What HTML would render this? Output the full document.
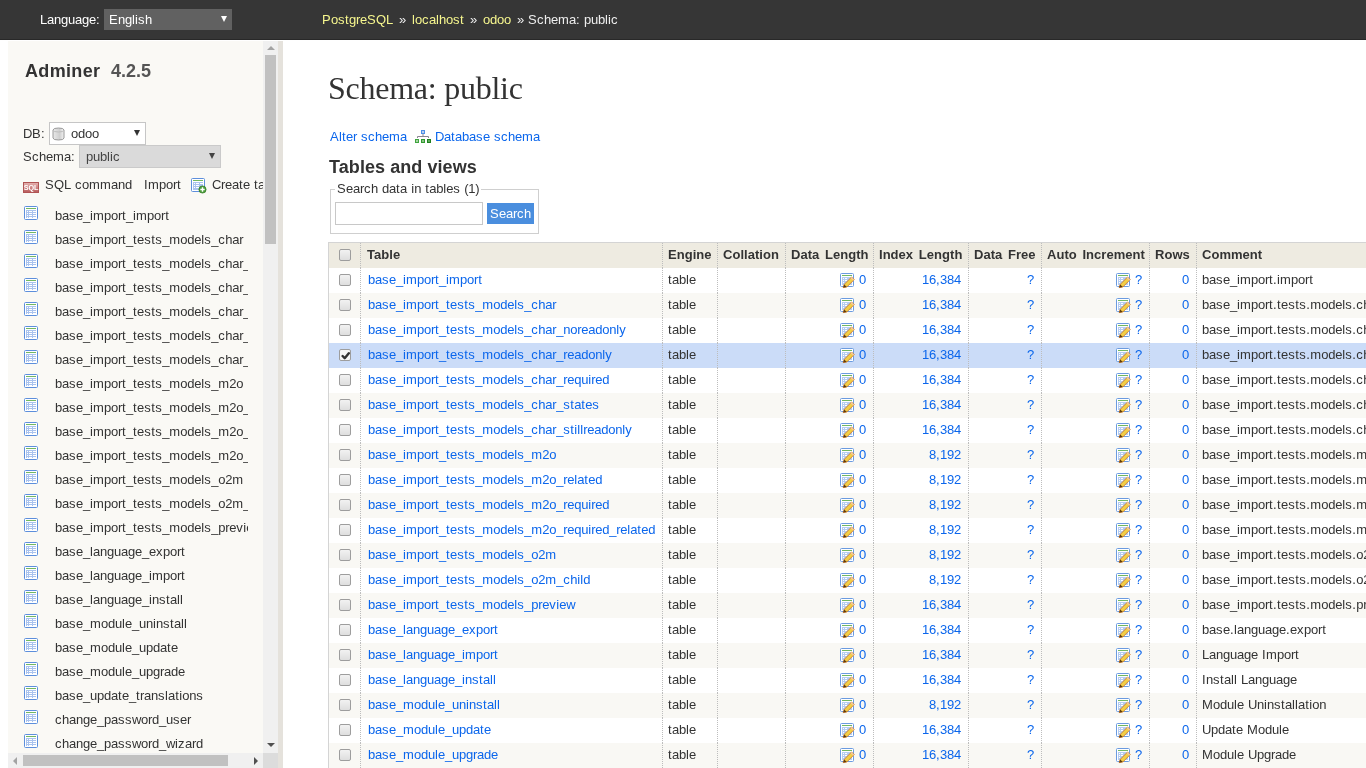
<!DOCTYPE html>
<html><head><meta charset="utf-8"><title>Schema: public - odoo - Adminer</title>
<style>
*{box-sizing:border-box}
html,body{margin:0;padding:0;width:1366px;height:768px;overflow:hidden;background:#fff;font:13px/15px "Liberation Sans",sans-serif;color:#333}
.abs{position:absolute;white-space:nowrap}
#wrap{letter-spacing:-0.2299px}
i{font-style:normal}.k0{letter-spacing:0.5px}.k1{letter-spacing:0.1118px}.k2{letter-spacing:0.1709px}.k3{letter-spacing:-0.3291px}.k4{letter-spacing:0.3882px}.k5{letter-spacing:-0.3882px}.k6{letter-spacing:0.3291px}.k7{letter-spacing:-0.1118px}
#hdr{position:absolute;left:0;top:0;width:1366px;height:40px;background:#363636;border-bottom:1px solid #282828}
#lang{left:40px;top:12px;color:#fff}
#lsel{position:absolute;left:104px;top:9px;width:128px;height:21px;background:#616161}
#lsel span{position:absolute;left:5px;top:3px;color:#fff}
.tri{position:absolute;width:0;height:0;border-left:3.5px solid transparent;border-right:3.5px solid transparent}
.bc{top:12px;color:#eee}
.bc a{color:#f6f68e}
#menu{position:absolute;left:8px;top:41px;width:255px;height:712px;background:#faf9f5;overflow:hidden}
#vsb{position:absolute;left:263px;top:41px;width:15px;height:712px;background:#f0f0f0}
#vth{position:absolute;left:265px;top:55px;width:11px;height:189px;background:#c1c1c1}
#hsb{position:absolute;left:8px;top:753px;width:255px;height:15px;background:#f0f0f0}
#hth{position:absolute;left:23px;top:755px;width:205px;height:11px;background:#c1c1c1}
#corner{position:absolute;left:263px;top:753px;width:15px;height:15px;background:#dcdcdc}
#strip{position:absolute;left:278px;top:41px;width:5px;height:727px;background:#e5e2dc}
.si{position:absolute;left:16px;width:14px;height:14px}
.si svg{display:block}
.st{position:absolute;left:47px;width:193px;overflow:hidden;white-space:nowrap;color:#333}
#h1{position:absolute;left:328px;top:70px;letter-spacing:-0.25px;font:32px/36px "Liberation Serif",serif;color:#333;white-space:nowrap}
a{color:#0b66ec;text-decoration:none}
#links{left:330px;top:129px}
#h2{position:absolute;left:329px;top:157px;letter-spacing:.07px;font:bold 18px/21px "Liberation Sans",sans-serif;color:#333;white-space:nowrap}
#fs{position:absolute;left:330px;top:189px;width:209px;height:45px;border:1px solid #cfcfcf}
#legend{position:absolute;left:335px;top:181px;padding:0 2px;background:#fff;white-space:nowrap;color:#333}
#sinp{position:absolute;left:335px;top:202px;width:148px;height:23px;border:1px solid #c8c8c8;background:#fff}
#sbtn{position:absolute;left:487px;top:203px;width:47px;height:21px;background:#4a8ede;color:#fff;text-align:center;line-height:21px}
#tbl{position:absolute;left:328px;top:242px;border-collapse:separate;border-spacing:0;table-layout:fixed;border-top:1px solid #d4d4d4;border-left:1px solid #d4d4d4;width:1500px}
#tbl td,#tbl th{height:25px;padding:4px 7px 6px 6px;line-height:15px;vertical-align:top;white-space:nowrap;overflow:hidden;border-left:1px dotted #bdbdbd;text-align:left}
#tbl th{background:#eeebe1;font-weight:bold;color:#333;letter-spacing:.03px;word-spacing:2.1px;padding-left:5px}
#tbl th.c1h{padding-left:6px}
#tbl td{padding-left:5px}
#tbl td.c1{padding-left:7px}
#tbl .c0{border-left:0;padding-left:6px}
#tbl .r{text-align:right}
tr.odd td{background:#fff}
tr.even td{background:#f9f8f4}
tr.sel td{background:#cbdcf8}
.cb{display:block;width:12px;height:12px;margin:2px 0 0 4px;border:1px solid #9d9d9d;border-radius:2px;background:linear-gradient(#f2f2f2,#dedede)}
.cb.checked{background:#f6f6f6;position:relative}
.cb.checked svg{position:absolute;left:1px;top:1px}
.ei{display:inline-block;vertical-align:top;margin:1px 3px -2px 0}
</style></head><body><div id="wrap" style="position:absolute;left:0;top:0;width:1366px;height:768px;overflow:hidden;will-change:transform">
<div id="hdr"></div>
<div id="lang" class="abs">Language<i class="k4">:</i></div>
<div id="lsel"><span><i class="k6">E</i>ng<i class="k1">l</i><i class="k1">i</i><i class="k0">s</i>h</span><div class="tri" style="left:117px;top:7px;border-top:6px solid #fff"></div></div>
<div class="abs bc" style="left:322px"><a><i class="k6">P</i>o<i class="k0">s</i><i class="k4">t</i>g<i class="k3">r</i>e<i class="k6">S</i><i class="k7">Q</i>L</a></div><div class="abs bc" style="left:399px">»</div><div class="abs bc" style="left:412px"><a><i class="k1">l</i>o<i class="k0">c</i>a<i class="k1">l</i>ho<i class="k0">s</i><i class="k4">t</i></a></div><div class="abs bc" style="left:470px">»</div><div class="abs bc" style="left:483px"><a>odoo</a></div><div class="abs bc" style="left:517px">»</div><div class="abs bc" style="left:528px"><i class="k6">S</i><i class="k0">c</i>he<i class="k2">m</i>a<i class="k4">:</i><i class="k4"> </i>pub<i class="k1">l</i><i class="k1">i</i><i class="k0">c</i></div>

<div id="menu">
<div class="abs" style="left:17px;top:20px;letter-spacing:.33px;font:bold 18px/21px 'Liberation Sans',sans-serif;color:#333">Adminer</div>
<div class="abs" style="left:103px;top:20px;letter-spacing:0;font:bold 18px/21px 'Liberation Sans',sans-serif;color:#555">4.2.5</div>
<div class="abs" style="left:15px;top:85px"><i class="k5">D</i><i class="k6">B</i><i class="k4">:</i></div>
<div style="position:absolute;left:41px;top:81px;width:97px;height:23px;background:#fff;border:1px solid #c6c6c6">
  <svg style="position:absolute;left:2px;top:4px" width="13" height="14" viewBox="0 0 13 14"><defs><linearGradient id="cy" x1="0" x2="1"><stop offset="0" stop-color="#e9e9e9"/><stop offset=".6" stop-color="#cfcfcf"/><stop offset="1" stop-color="#f4f4f4"/></linearGradient></defs><path d="M1 3 Q1 1 6.5 1 Q12 1 12 3 L12 11 Q12 13 6.5 13 Q1 13 1 11 Z" fill="url(#cy)" stroke="#9a9a9a"/><path d="M1 3 Q1 5 6.5 5 Q12 5 12 3" fill="none" stroke="#bdbdbd"/></svg>
  <div class="abs" style="left:21px;top:3px;color:#333">odoo</div>
  <div class="tri" style="left:84px;top:7px;border-top:6px solid #333"></div>
</div>
<div class="abs" style="left:15px;top:108px"><i class="k6">S</i><i class="k0">c</i>he<i class="k2">m</i>a<i class="k4">:</i></div>
<div style="position:absolute;left:71px;top:104px;width:142px;height:23px;background:#dadada;border:1px solid #cacaca">
  <div class="abs" style="left:6px;top:3px;color:#444">pub<i class="k1">l</i><i class="k1">i</i><i class="k0">c</i></div>
  <div class="tri" style="left:129px;top:7px;border-top:6px solid #444"></div>
</div>
<svg style="position:absolute;left:15px;top:141px" width="16" height="11" viewBox="0 0 16 11"><defs><linearGradient id="sq" x1="0" y1="0" x2="0" y2="1"><stop offset="0" stop-color="#e6b4b2"/><stop offset="1" stop-color="#b85a5a"/></linearGradient></defs><rect x="0.5" y="0.5" width="15" height="10" fill="url(#sq)" stroke="#b05454"/><text x="8" y="8.3" font-family="Liberation Sans" font-weight="bold" font-size="7.2" fill="#fff" text-anchor="middle" letter-spacing="-0.1">SQL</text></svg>
<div class="abs" style="left:37px;top:136px"><i class="k6">S</i><i class="k7">Q</i>L<i class="k4"> </i><i class="k0">c</i>o<i class="k2">m</i><i class="k2">m</i>and</div>
<div class="abs" style="left:136px;top:136px"><i class="k4">I</i><i class="k2">m</i>po<i class="k3">r</i><i class="k4">t</i></div>
<svg style="position:absolute;left:183px;top:137px" width="16" height="16" viewBox="0 0 16 16"><rect x="0.5" y="0.5" width="13" height="13" rx="1" fill="#fff" stroke="#5d8fdc"/><rect x="2" y="2" width="10" height="1" fill="#72b863"/><rect x="2" y="4" width="10" height="8" fill="#a9c3ee"/><g fill="#fff"><rect x="3" y="5" width="1" height="1"/><rect x="5" y="5" width="3" height="1"/><rect x="9" y="5" width="3" height="1"/><rect x="3" y="7" width="1" height="1"/><rect x="5" y="7" width="3" height="1"/><rect x="3" y="9" width="1" height="1"/><rect x="5" y="9" width="3" height="1"/></g><circle cx="11.5" cy="11.5" r="3.6" fill="#4c9e3a" stroke="#2f7a22" stroke-width="0.7"/><path d="M11.5 9.3 V13.7 M9.3 11.5 H13.7" stroke="#fff" stroke-width="1.4"/></svg>
<div class="abs" style="left:204px;top:136px;width:51px;overflow:hidden"><i class="k5">C</i><i class="k3">r</i>ea<i class="k4">t</i>e<i class="k4"> </i><i class="k4">t</i>ab<i class="k1">l</i>e</div>
<div class="si" style="top:165px"><svg class="ti" width="14" height="14" viewBox="0 0 14 14"><rect x="0.5" y="0.5" width="13" height="13" rx="1" fill="#fff" stroke="#5d8fdc"/><rect x="2" y="2" width="10" height="1" fill="#72b863"/><rect x="2" y="4" width="10" height="8" fill="#a9c3ee"/><g fill="#fff"><rect x="3" y="5" width="1" height="1"/><rect x="5" y="5" width="3" height="1"/><rect x="9" y="5" width="3" height="1"/><rect x="3" y="7" width="1" height="1"/><rect x="5" y="7" width="3" height="1"/><rect x="9" y="7" width="3" height="1"/><rect x="3" y="9" width="1" height="1"/><rect x="5" y="9" width="3" height="1"/><rect x="9" y="9" width="3" height="1"/><rect x="3" y="11" width="1" height="1"/><rect x="5" y="11" width="3" height="1"/><rect x="9" y="11" width="3" height="1"/></g></svg></div>
<div class="st" style="top:167px">ba<i class="k0">s</i>e_<i class="k1">i</i><i class="k2">m</i>po<i class="k3">r</i><i class="k4">t</i>_<i class="k1">i</i><i class="k2">m</i>po<i class="k3">r</i><i class="k4">t</i></div>
<div class="si" style="top:189px"><svg class="ti" width="14" height="14" viewBox="0 0 14 14"><rect x="0.5" y="0.5" width="13" height="13" rx="1" fill="#fff" stroke="#5d8fdc"/><rect x="2" y="2" width="10" height="1" fill="#72b863"/><rect x="2" y="4" width="10" height="8" fill="#a9c3ee"/><g fill="#fff"><rect x="3" y="5" width="1" height="1"/><rect x="5" y="5" width="3" height="1"/><rect x="9" y="5" width="3" height="1"/><rect x="3" y="7" width="1" height="1"/><rect x="5" y="7" width="3" height="1"/><rect x="9" y="7" width="3" height="1"/><rect x="3" y="9" width="1" height="1"/><rect x="5" y="9" width="3" height="1"/><rect x="9" y="9" width="3" height="1"/><rect x="3" y="11" width="1" height="1"/><rect x="5" y="11" width="3" height="1"/><rect x="9" y="11" width="3" height="1"/></g></svg></div>
<div class="st" style="top:191px">ba<i class="k0">s</i>e_<i class="k1">i</i><i class="k2">m</i>po<i class="k3">r</i><i class="k4">t</i>_<i class="k4">t</i>e<i class="k0">s</i><i class="k4">t</i><i class="k0">s</i>_<i class="k2">m</i>ode<i class="k1">l</i><i class="k0">s</i>_<i class="k0">c</i>ha<i class="k3">r</i></div>
<div class="si" style="top:213px"><svg class="ti" width="14" height="14" viewBox="0 0 14 14"><rect x="0.5" y="0.5" width="13" height="13" rx="1" fill="#fff" stroke="#5d8fdc"/><rect x="2" y="2" width="10" height="1" fill="#72b863"/><rect x="2" y="4" width="10" height="8" fill="#a9c3ee"/><g fill="#fff"><rect x="3" y="5" width="1" height="1"/><rect x="5" y="5" width="3" height="1"/><rect x="9" y="5" width="3" height="1"/><rect x="3" y="7" width="1" height="1"/><rect x="5" y="7" width="3" height="1"/><rect x="9" y="7" width="3" height="1"/><rect x="3" y="9" width="1" height="1"/><rect x="5" y="9" width="3" height="1"/><rect x="9" y="9" width="3" height="1"/><rect x="3" y="11" width="1" height="1"/><rect x="5" y="11" width="3" height="1"/><rect x="9" y="11" width="3" height="1"/></g></svg></div>
<div class="st" style="top:215px">ba<i class="k0">s</i>e_<i class="k1">i</i><i class="k2">m</i>po<i class="k3">r</i><i class="k4">t</i>_<i class="k4">t</i>e<i class="k0">s</i><i class="k4">t</i><i class="k0">s</i>_<i class="k2">m</i>ode<i class="k1">l</i><i class="k0">s</i>_<i class="k0">c</i>ha<i class="k3">r</i>_no<i class="k3">r</i>eadon<i class="k1">l</i><i class="k0">y</i></div>
<div class="si" style="top:237px"><svg class="ti" width="14" height="14" viewBox="0 0 14 14"><rect x="0.5" y="0.5" width="13" height="13" rx="1" fill="#fff" stroke="#5d8fdc"/><rect x="2" y="2" width="10" height="1" fill="#72b863"/><rect x="2" y="4" width="10" height="8" fill="#a9c3ee"/><g fill="#fff"><rect x="3" y="5" width="1" height="1"/><rect x="5" y="5" width="3" height="1"/><rect x="9" y="5" width="3" height="1"/><rect x="3" y="7" width="1" height="1"/><rect x="5" y="7" width="3" height="1"/><rect x="9" y="7" width="3" height="1"/><rect x="3" y="9" width="1" height="1"/><rect x="5" y="9" width="3" height="1"/><rect x="9" y="9" width="3" height="1"/><rect x="3" y="11" width="1" height="1"/><rect x="5" y="11" width="3" height="1"/><rect x="9" y="11" width="3" height="1"/></g></svg></div>
<div class="st" style="top:239px">ba<i class="k0">s</i>e_<i class="k1">i</i><i class="k2">m</i>po<i class="k3">r</i><i class="k4">t</i>_<i class="k4">t</i>e<i class="k0">s</i><i class="k4">t</i><i class="k0">s</i>_<i class="k2">m</i>ode<i class="k1">l</i><i class="k0">s</i>_<i class="k0">c</i>ha<i class="k3">r</i>_<i class="k3">r</i>eadon<i class="k1">l</i><i class="k0">y</i></div>
<div class="si" style="top:261px"><svg class="ti" width="14" height="14" viewBox="0 0 14 14"><rect x="0.5" y="0.5" width="13" height="13" rx="1" fill="#fff" stroke="#5d8fdc"/><rect x="2" y="2" width="10" height="1" fill="#72b863"/><rect x="2" y="4" width="10" height="8" fill="#a9c3ee"/><g fill="#fff"><rect x="3" y="5" width="1" height="1"/><rect x="5" y="5" width="3" height="1"/><rect x="9" y="5" width="3" height="1"/><rect x="3" y="7" width="1" height="1"/><rect x="5" y="7" width="3" height="1"/><rect x="9" y="7" width="3" height="1"/><rect x="3" y="9" width="1" height="1"/><rect x="5" y="9" width="3" height="1"/><rect x="9" y="9" width="3" height="1"/><rect x="3" y="11" width="1" height="1"/><rect x="5" y="11" width="3" height="1"/><rect x="9" y="11" width="3" height="1"/></g></svg></div>
<div class="st" style="top:263px">ba<i class="k0">s</i>e_<i class="k1">i</i><i class="k2">m</i>po<i class="k3">r</i><i class="k4">t</i>_<i class="k4">t</i>e<i class="k0">s</i><i class="k4">t</i><i class="k0">s</i>_<i class="k2">m</i>ode<i class="k1">l</i><i class="k0">s</i>_<i class="k0">c</i>ha<i class="k3">r</i>_<i class="k3">r</i>equ<i class="k1">i</i><i class="k3">r</i>ed</div>
<div class="si" style="top:285px"><svg class="ti" width="14" height="14" viewBox="0 0 14 14"><rect x="0.5" y="0.5" width="13" height="13" rx="1" fill="#fff" stroke="#5d8fdc"/><rect x="2" y="2" width="10" height="1" fill="#72b863"/><rect x="2" y="4" width="10" height="8" fill="#a9c3ee"/><g fill="#fff"><rect x="3" y="5" width="1" height="1"/><rect x="5" y="5" width="3" height="1"/><rect x="9" y="5" width="3" height="1"/><rect x="3" y="7" width="1" height="1"/><rect x="5" y="7" width="3" height="1"/><rect x="9" y="7" width="3" height="1"/><rect x="3" y="9" width="1" height="1"/><rect x="5" y="9" width="3" height="1"/><rect x="9" y="9" width="3" height="1"/><rect x="3" y="11" width="1" height="1"/><rect x="5" y="11" width="3" height="1"/><rect x="9" y="11" width="3" height="1"/></g></svg></div>
<div class="st" style="top:287px">ba<i class="k0">s</i>e_<i class="k1">i</i><i class="k2">m</i>po<i class="k3">r</i><i class="k4">t</i>_<i class="k4">t</i>e<i class="k0">s</i><i class="k4">t</i><i class="k0">s</i>_<i class="k2">m</i>ode<i class="k1">l</i><i class="k0">s</i>_<i class="k0">c</i>ha<i class="k3">r</i>_<i class="k0">s</i><i class="k4">t</i>a<i class="k4">t</i>e<i class="k0">s</i></div>
<div class="si" style="top:309px"><svg class="ti" width="14" height="14" viewBox="0 0 14 14"><rect x="0.5" y="0.5" width="13" height="13" rx="1" fill="#fff" stroke="#5d8fdc"/><rect x="2" y="2" width="10" height="1" fill="#72b863"/><rect x="2" y="4" width="10" height="8" fill="#a9c3ee"/><g fill="#fff"><rect x="3" y="5" width="1" height="1"/><rect x="5" y="5" width="3" height="1"/><rect x="9" y="5" width="3" height="1"/><rect x="3" y="7" width="1" height="1"/><rect x="5" y="7" width="3" height="1"/><rect x="9" y="7" width="3" height="1"/><rect x="3" y="9" width="1" height="1"/><rect x="5" y="9" width="3" height="1"/><rect x="9" y="9" width="3" height="1"/><rect x="3" y="11" width="1" height="1"/><rect x="5" y="11" width="3" height="1"/><rect x="9" y="11" width="3" height="1"/></g></svg></div>
<div class="st" style="top:311px">ba<i class="k0">s</i>e_<i class="k1">i</i><i class="k2">m</i>po<i class="k3">r</i><i class="k4">t</i>_<i class="k4">t</i>e<i class="k0">s</i><i class="k4">t</i><i class="k0">s</i>_<i class="k2">m</i>ode<i class="k1">l</i><i class="k0">s</i>_<i class="k0">c</i>ha<i class="k3">r</i>_<i class="k0">s</i><i class="k4">t</i><i class="k1">i</i><i class="k1">l</i><i class="k1">l</i><i class="k3">r</i>eadon<i class="k1">l</i><i class="k0">y</i></div>
<div class="si" style="top:333px"><svg class="ti" width="14" height="14" viewBox="0 0 14 14"><rect x="0.5" y="0.5" width="13" height="13" rx="1" fill="#fff" stroke="#5d8fdc"/><rect x="2" y="2" width="10" height="1" fill="#72b863"/><rect x="2" y="4" width="10" height="8" fill="#a9c3ee"/><g fill="#fff"><rect x="3" y="5" width="1" height="1"/><rect x="5" y="5" width="3" height="1"/><rect x="9" y="5" width="3" height="1"/><rect x="3" y="7" width="1" height="1"/><rect x="5" y="7" width="3" height="1"/><rect x="9" y="7" width="3" height="1"/><rect x="3" y="9" width="1" height="1"/><rect x="5" y="9" width="3" height="1"/><rect x="9" y="9" width="3" height="1"/><rect x="3" y="11" width="1" height="1"/><rect x="5" y="11" width="3" height="1"/><rect x="9" y="11" width="3" height="1"/></g></svg></div>
<div class="st" style="top:335px">ba<i class="k0">s</i>e_<i class="k1">i</i><i class="k2">m</i>po<i class="k3">r</i><i class="k4">t</i>_<i class="k4">t</i>e<i class="k0">s</i><i class="k4">t</i><i class="k0">s</i>_<i class="k2">m</i>ode<i class="k1">l</i><i class="k0">s</i>_<i class="k2">m</i>2o</div>
<div class="si" style="top:357px"><svg class="ti" width="14" height="14" viewBox="0 0 14 14"><rect x="0.5" y="0.5" width="13" height="13" rx="1" fill="#fff" stroke="#5d8fdc"/><rect x="2" y="2" width="10" height="1" fill="#72b863"/><rect x="2" y="4" width="10" height="8" fill="#a9c3ee"/><g fill="#fff"><rect x="3" y="5" width="1" height="1"/><rect x="5" y="5" width="3" height="1"/><rect x="9" y="5" width="3" height="1"/><rect x="3" y="7" width="1" height="1"/><rect x="5" y="7" width="3" height="1"/><rect x="9" y="7" width="3" height="1"/><rect x="3" y="9" width="1" height="1"/><rect x="5" y="9" width="3" height="1"/><rect x="9" y="9" width="3" height="1"/><rect x="3" y="11" width="1" height="1"/><rect x="5" y="11" width="3" height="1"/><rect x="9" y="11" width="3" height="1"/></g></svg></div>
<div class="st" style="top:359px">ba<i class="k0">s</i>e_<i class="k1">i</i><i class="k2">m</i>po<i class="k3">r</i><i class="k4">t</i>_<i class="k4">t</i>e<i class="k0">s</i><i class="k4">t</i><i class="k0">s</i>_<i class="k2">m</i>ode<i class="k1">l</i><i class="k0">s</i>_<i class="k2">m</i>2o_<i class="k3">r</i>e<i class="k1">l</i>a<i class="k4">t</i>ed</div>
<div class="si" style="top:381px"><svg class="ti" width="14" height="14" viewBox="0 0 14 14"><rect x="0.5" y="0.5" width="13" height="13" rx="1" fill="#fff" stroke="#5d8fdc"/><rect x="2" y="2" width="10" height="1" fill="#72b863"/><rect x="2" y="4" width="10" height="8" fill="#a9c3ee"/><g fill="#fff"><rect x="3" y="5" width="1" height="1"/><rect x="5" y="5" width="3" height="1"/><rect x="9" y="5" width="3" height="1"/><rect x="3" y="7" width="1" height="1"/><rect x="5" y="7" width="3" height="1"/><rect x="9" y="7" width="3" height="1"/><rect x="3" y="9" width="1" height="1"/><rect x="5" y="9" width="3" height="1"/><rect x="9" y="9" width="3" height="1"/><rect x="3" y="11" width="1" height="1"/><rect x="5" y="11" width="3" height="1"/><rect x="9" y="11" width="3" height="1"/></g></svg></div>
<div class="st" style="top:383px">ba<i class="k0">s</i>e_<i class="k1">i</i><i class="k2">m</i>po<i class="k3">r</i><i class="k4">t</i>_<i class="k4">t</i>e<i class="k0">s</i><i class="k4">t</i><i class="k0">s</i>_<i class="k2">m</i>ode<i class="k1">l</i><i class="k0">s</i>_<i class="k2">m</i>2o_<i class="k3">r</i>equ<i class="k1">i</i><i class="k3">r</i>ed</div>
<div class="si" style="top:405px"><svg class="ti" width="14" height="14" viewBox="0 0 14 14"><rect x="0.5" y="0.5" width="13" height="13" rx="1" fill="#fff" stroke="#5d8fdc"/><rect x="2" y="2" width="10" height="1" fill="#72b863"/><rect x="2" y="4" width="10" height="8" fill="#a9c3ee"/><g fill="#fff"><rect x="3" y="5" width="1" height="1"/><rect x="5" y="5" width="3" height="1"/><rect x="9" y="5" width="3" height="1"/><rect x="3" y="7" width="1" height="1"/><rect x="5" y="7" width="3" height="1"/><rect x="9" y="7" width="3" height="1"/><rect x="3" y="9" width="1" height="1"/><rect x="5" y="9" width="3" height="1"/><rect x="9" y="9" width="3" height="1"/><rect x="3" y="11" width="1" height="1"/><rect x="5" y="11" width="3" height="1"/><rect x="9" y="11" width="3" height="1"/></g></svg></div>
<div class="st" style="top:407px">ba<i class="k0">s</i>e_<i class="k1">i</i><i class="k2">m</i>po<i class="k3">r</i><i class="k4">t</i>_<i class="k4">t</i>e<i class="k0">s</i><i class="k4">t</i><i class="k0">s</i>_<i class="k2">m</i>ode<i class="k1">l</i><i class="k0">s</i>_<i class="k2">m</i>2o_<i class="k3">r</i>equ<i class="k1">i</i><i class="k3">r</i>ed_<i class="k3">r</i>e<i class="k1">l</i>a<i class="k4">t</i>ed</div>
<div class="si" style="top:429px"><svg class="ti" width="14" height="14" viewBox="0 0 14 14"><rect x="0.5" y="0.5" width="13" height="13" rx="1" fill="#fff" stroke="#5d8fdc"/><rect x="2" y="2" width="10" height="1" fill="#72b863"/><rect x="2" y="4" width="10" height="8" fill="#a9c3ee"/><g fill="#fff"><rect x="3" y="5" width="1" height="1"/><rect x="5" y="5" width="3" height="1"/><rect x="9" y="5" width="3" height="1"/><rect x="3" y="7" width="1" height="1"/><rect x="5" y="7" width="3" height="1"/><rect x="9" y="7" width="3" height="1"/><rect x="3" y="9" width="1" height="1"/><rect x="5" y="9" width="3" height="1"/><rect x="9" y="9" width="3" height="1"/><rect x="3" y="11" width="1" height="1"/><rect x="5" y="11" width="3" height="1"/><rect x="9" y="11" width="3" height="1"/></g></svg></div>
<div class="st" style="top:431px">ba<i class="k0">s</i>e_<i class="k1">i</i><i class="k2">m</i>po<i class="k3">r</i><i class="k4">t</i>_<i class="k4">t</i>e<i class="k0">s</i><i class="k4">t</i><i class="k0">s</i>_<i class="k2">m</i>ode<i class="k1">l</i><i class="k0">s</i>_o2<i class="k2">m</i></div>
<div class="si" style="top:453px"><svg class="ti" width="14" height="14" viewBox="0 0 14 14"><rect x="0.5" y="0.5" width="13" height="13" rx="1" fill="#fff" stroke="#5d8fdc"/><rect x="2" y="2" width="10" height="1" fill="#72b863"/><rect x="2" y="4" width="10" height="8" fill="#a9c3ee"/><g fill="#fff"><rect x="3" y="5" width="1" height="1"/><rect x="5" y="5" width="3" height="1"/><rect x="9" y="5" width="3" height="1"/><rect x="3" y="7" width="1" height="1"/><rect x="5" y="7" width="3" height="1"/><rect x="9" y="7" width="3" height="1"/><rect x="3" y="9" width="1" height="1"/><rect x="5" y="9" width="3" height="1"/><rect x="9" y="9" width="3" height="1"/><rect x="3" y="11" width="1" height="1"/><rect x="5" y="11" width="3" height="1"/><rect x="9" y="11" width="3" height="1"/></g></svg></div>
<div class="st" style="top:455px">ba<i class="k0">s</i>e_<i class="k1">i</i><i class="k2">m</i>po<i class="k3">r</i><i class="k4">t</i>_<i class="k4">t</i>e<i class="k0">s</i><i class="k4">t</i><i class="k0">s</i>_<i class="k2">m</i>ode<i class="k1">l</i><i class="k0">s</i>_o2<i class="k2">m</i>_<i class="k0">c</i>h<i class="k1">i</i><i class="k1">l</i>d</div>
<div class="si" style="top:477px"><svg class="ti" width="14" height="14" viewBox="0 0 14 14"><rect x="0.5" y="0.5" width="13" height="13" rx="1" fill="#fff" stroke="#5d8fdc"/><rect x="2" y="2" width="10" height="1" fill="#72b863"/><rect x="2" y="4" width="10" height="8" fill="#a9c3ee"/><g fill="#fff"><rect x="3" y="5" width="1" height="1"/><rect x="5" y="5" width="3" height="1"/><rect x="9" y="5" width="3" height="1"/><rect x="3" y="7" width="1" height="1"/><rect x="5" y="7" width="3" height="1"/><rect x="9" y="7" width="3" height="1"/><rect x="3" y="9" width="1" height="1"/><rect x="5" y="9" width="3" height="1"/><rect x="9" y="9" width="3" height="1"/><rect x="3" y="11" width="1" height="1"/><rect x="5" y="11" width="3" height="1"/><rect x="9" y="11" width="3" height="1"/></g></svg></div>
<div class="st" style="top:479px">ba<i class="k0">s</i>e_<i class="k1">i</i><i class="k2">m</i>po<i class="k3">r</i><i class="k4">t</i>_<i class="k4">t</i>e<i class="k0">s</i><i class="k4">t</i><i class="k0">s</i>_<i class="k2">m</i>ode<i class="k1">l</i><i class="k0">s</i>_p<i class="k3">r</i>e<i class="k0">v</i><i class="k1">i</i>e<i class="k5">w</i></div>
<div class="si" style="top:501px"><svg class="ti" width="14" height="14" viewBox="0 0 14 14"><rect x="0.5" y="0.5" width="13" height="13" rx="1" fill="#fff" stroke="#5d8fdc"/><rect x="2" y="2" width="10" height="1" fill="#72b863"/><rect x="2" y="4" width="10" height="8" fill="#a9c3ee"/><g fill="#fff"><rect x="3" y="5" width="1" height="1"/><rect x="5" y="5" width="3" height="1"/><rect x="9" y="5" width="3" height="1"/><rect x="3" y="7" width="1" height="1"/><rect x="5" y="7" width="3" height="1"/><rect x="9" y="7" width="3" height="1"/><rect x="3" y="9" width="1" height="1"/><rect x="5" y="9" width="3" height="1"/><rect x="9" y="9" width="3" height="1"/><rect x="3" y="11" width="1" height="1"/><rect x="5" y="11" width="3" height="1"/><rect x="9" y="11" width="3" height="1"/></g></svg></div>
<div class="st" style="top:503px">ba<i class="k0">s</i>e_<i class="k1">l</i>anguage_e<i class="k0">x</i>po<i class="k3">r</i><i class="k4">t</i></div>
<div class="si" style="top:525px"><svg class="ti" width="14" height="14" viewBox="0 0 14 14"><rect x="0.5" y="0.5" width="13" height="13" rx="1" fill="#fff" stroke="#5d8fdc"/><rect x="2" y="2" width="10" height="1" fill="#72b863"/><rect x="2" y="4" width="10" height="8" fill="#a9c3ee"/><g fill="#fff"><rect x="3" y="5" width="1" height="1"/><rect x="5" y="5" width="3" height="1"/><rect x="9" y="5" width="3" height="1"/><rect x="3" y="7" width="1" height="1"/><rect x="5" y="7" width="3" height="1"/><rect x="9" y="7" width="3" height="1"/><rect x="3" y="9" width="1" height="1"/><rect x="5" y="9" width="3" height="1"/><rect x="9" y="9" width="3" height="1"/><rect x="3" y="11" width="1" height="1"/><rect x="5" y="11" width="3" height="1"/><rect x="9" y="11" width="3" height="1"/></g></svg></div>
<div class="st" style="top:527px">ba<i class="k0">s</i>e_<i class="k1">l</i>anguage_<i class="k1">i</i><i class="k2">m</i>po<i class="k3">r</i><i class="k4">t</i></div>
<div class="si" style="top:549px"><svg class="ti" width="14" height="14" viewBox="0 0 14 14"><rect x="0.5" y="0.5" width="13" height="13" rx="1" fill="#fff" stroke="#5d8fdc"/><rect x="2" y="2" width="10" height="1" fill="#72b863"/><rect x="2" y="4" width="10" height="8" fill="#a9c3ee"/><g fill="#fff"><rect x="3" y="5" width="1" height="1"/><rect x="5" y="5" width="3" height="1"/><rect x="9" y="5" width="3" height="1"/><rect x="3" y="7" width="1" height="1"/><rect x="5" y="7" width="3" height="1"/><rect x="9" y="7" width="3" height="1"/><rect x="3" y="9" width="1" height="1"/><rect x="5" y="9" width="3" height="1"/><rect x="9" y="9" width="3" height="1"/><rect x="3" y="11" width="1" height="1"/><rect x="5" y="11" width="3" height="1"/><rect x="9" y="11" width="3" height="1"/></g></svg></div>
<div class="st" style="top:551px">ba<i class="k0">s</i>e_<i class="k1">l</i>anguage_<i class="k1">i</i>n<i class="k0">s</i><i class="k4">t</i>a<i class="k1">l</i><i class="k1">l</i></div>
<div class="si" style="top:573px"><svg class="ti" width="14" height="14" viewBox="0 0 14 14"><rect x="0.5" y="0.5" width="13" height="13" rx="1" fill="#fff" stroke="#5d8fdc"/><rect x="2" y="2" width="10" height="1" fill="#72b863"/><rect x="2" y="4" width="10" height="8" fill="#a9c3ee"/><g fill="#fff"><rect x="3" y="5" width="1" height="1"/><rect x="5" y="5" width="3" height="1"/><rect x="9" y="5" width="3" height="1"/><rect x="3" y="7" width="1" height="1"/><rect x="5" y="7" width="3" height="1"/><rect x="9" y="7" width="3" height="1"/><rect x="3" y="9" width="1" height="1"/><rect x="5" y="9" width="3" height="1"/><rect x="9" y="9" width="3" height="1"/><rect x="3" y="11" width="1" height="1"/><rect x="5" y="11" width="3" height="1"/><rect x="9" y="11" width="3" height="1"/></g></svg></div>
<div class="st" style="top:575px">ba<i class="k0">s</i>e_<i class="k2">m</i>odu<i class="k1">l</i>e_un<i class="k1">i</i>n<i class="k0">s</i><i class="k4">t</i>a<i class="k1">l</i><i class="k1">l</i></div>
<div class="si" style="top:597px"><svg class="ti" width="14" height="14" viewBox="0 0 14 14"><rect x="0.5" y="0.5" width="13" height="13" rx="1" fill="#fff" stroke="#5d8fdc"/><rect x="2" y="2" width="10" height="1" fill="#72b863"/><rect x="2" y="4" width="10" height="8" fill="#a9c3ee"/><g fill="#fff"><rect x="3" y="5" width="1" height="1"/><rect x="5" y="5" width="3" height="1"/><rect x="9" y="5" width="3" height="1"/><rect x="3" y="7" width="1" height="1"/><rect x="5" y="7" width="3" height="1"/><rect x="9" y="7" width="3" height="1"/><rect x="3" y="9" width="1" height="1"/><rect x="5" y="9" width="3" height="1"/><rect x="9" y="9" width="3" height="1"/><rect x="3" y="11" width="1" height="1"/><rect x="5" y="11" width="3" height="1"/><rect x="9" y="11" width="3" height="1"/></g></svg></div>
<div class="st" style="top:599px">ba<i class="k0">s</i>e_<i class="k2">m</i>odu<i class="k1">l</i>e_upda<i class="k4">t</i>e</div>
<div class="si" style="top:621px"><svg class="ti" width="14" height="14" viewBox="0 0 14 14"><rect x="0.5" y="0.5" width="13" height="13" rx="1" fill="#fff" stroke="#5d8fdc"/><rect x="2" y="2" width="10" height="1" fill="#72b863"/><rect x="2" y="4" width="10" height="8" fill="#a9c3ee"/><g fill="#fff"><rect x="3" y="5" width="1" height="1"/><rect x="5" y="5" width="3" height="1"/><rect x="9" y="5" width="3" height="1"/><rect x="3" y="7" width="1" height="1"/><rect x="5" y="7" width="3" height="1"/><rect x="9" y="7" width="3" height="1"/><rect x="3" y="9" width="1" height="1"/><rect x="5" y="9" width="3" height="1"/><rect x="9" y="9" width="3" height="1"/><rect x="3" y="11" width="1" height="1"/><rect x="5" y="11" width="3" height="1"/><rect x="9" y="11" width="3" height="1"/></g></svg></div>
<div class="st" style="top:623px">ba<i class="k0">s</i>e_<i class="k2">m</i>odu<i class="k1">l</i>e_upg<i class="k3">r</i>ade</div>
<div class="si" style="top:645px"><svg class="ti" width="14" height="14" viewBox="0 0 14 14"><rect x="0.5" y="0.5" width="13" height="13" rx="1" fill="#fff" stroke="#5d8fdc"/><rect x="2" y="2" width="10" height="1" fill="#72b863"/><rect x="2" y="4" width="10" height="8" fill="#a9c3ee"/><g fill="#fff"><rect x="3" y="5" width="1" height="1"/><rect x="5" y="5" width="3" height="1"/><rect x="9" y="5" width="3" height="1"/><rect x="3" y="7" width="1" height="1"/><rect x="5" y="7" width="3" height="1"/><rect x="9" y="7" width="3" height="1"/><rect x="3" y="9" width="1" height="1"/><rect x="5" y="9" width="3" height="1"/><rect x="9" y="9" width="3" height="1"/><rect x="3" y="11" width="1" height="1"/><rect x="5" y="11" width="3" height="1"/><rect x="9" y="11" width="3" height="1"/></g></svg></div>
<div class="st" style="top:647px">ba<i class="k0">s</i>e_upda<i class="k4">t</i>e_<i class="k4">t</i><i class="k3">r</i>an<i class="k0">s</i><i class="k1">l</i>a<i class="k4">t</i><i class="k1">i</i>on<i class="k0">s</i></div>
<div class="si" style="top:669px"><svg class="ti" width="14" height="14" viewBox="0 0 14 14"><rect x="0.5" y="0.5" width="13" height="13" rx="1" fill="#fff" stroke="#5d8fdc"/><rect x="2" y="2" width="10" height="1" fill="#72b863"/><rect x="2" y="4" width="10" height="8" fill="#a9c3ee"/><g fill="#fff"><rect x="3" y="5" width="1" height="1"/><rect x="5" y="5" width="3" height="1"/><rect x="9" y="5" width="3" height="1"/><rect x="3" y="7" width="1" height="1"/><rect x="5" y="7" width="3" height="1"/><rect x="9" y="7" width="3" height="1"/><rect x="3" y="9" width="1" height="1"/><rect x="5" y="9" width="3" height="1"/><rect x="9" y="9" width="3" height="1"/><rect x="3" y="11" width="1" height="1"/><rect x="5" y="11" width="3" height="1"/><rect x="9" y="11" width="3" height="1"/></g></svg></div>
<div class="st" style="top:671px"><i class="k0">c</i>hange_pa<i class="k0">s</i><i class="k0">s</i><i class="k5">w</i>o<i class="k3">r</i>d_u<i class="k0">s</i>e<i class="k3">r</i></div>
<div class="si" style="top:693px"><svg class="ti" width="14" height="14" viewBox="0 0 14 14"><rect x="0.5" y="0.5" width="13" height="13" rx="1" fill="#fff" stroke="#5d8fdc"/><rect x="2" y="2" width="10" height="1" fill="#72b863"/><rect x="2" y="4" width="10" height="8" fill="#a9c3ee"/><g fill="#fff"><rect x="3" y="5" width="1" height="1"/><rect x="5" y="5" width="3" height="1"/><rect x="9" y="5" width="3" height="1"/><rect x="3" y="7" width="1" height="1"/><rect x="5" y="7" width="3" height="1"/><rect x="9" y="7" width="3" height="1"/><rect x="3" y="9" width="1" height="1"/><rect x="5" y="9" width="3" height="1"/><rect x="9" y="9" width="3" height="1"/><rect x="3" y="11" width="1" height="1"/><rect x="5" y="11" width="3" height="1"/><rect x="9" y="11" width="3" height="1"/></g></svg></div>
<div class="st" style="top:695px"><i class="k0">c</i>hange_pa<i class="k0">s</i><i class="k0">s</i><i class="k5">w</i>o<i class="k3">r</i>d_<i class="k5">w</i><i class="k1">i</i><i class="k0">z</i>a<i class="k3">r</i>d</div>
</div>
<div id="vsb"></div><div id="vth"></div>
<div class="tri" style="left:267px;top:46px;border-left:4px solid transparent;border-right:4px solid transparent;border-bottom:4px solid #a3a3a3"></div>
<div class="tri" style="left:267px;top:743px;border-left:4px solid transparent;border-right:4px solid transparent;border-top:4px solid #505050"></div>
<div id="hsb"></div><div id="hth"></div><div id="corner"></div>
<div class="tri" style="left:13px;top:757px;border-top:4px solid transparent;border-bottom:4px solid transparent;border-right:4px solid #a3a3a3;border-left:0"></div>
<div class="tri" style="left:254px;top:757px;border-top:4px solid transparent;border-bottom:4px solid transparent;border-left:4px solid #505050;border-right:0"></div>
<div id="strip"></div>

<div id="h1">Schema: public</div>
<div id="links" class="abs"><a><i class="k6">A</i><i class="k1">l</i><i class="k4">t</i>e<i class="k3">r</i><i class="k4"> </i><i class="k0">s</i><i class="k0">c</i>he<i class="k2">m</i>a</a></div>
<svg style="position:absolute;left:415px;top:130px" width="16" height="13" viewBox="0 0 16 13"><rect x="6" y="0" width="4" height="4" fill="#4d8fe6"/><rect x="7" y="1" width="2" height="2" fill="#b9cdee"/><path d="M2.5 8 V6.5 H13.5 V8 M8 4 V6.5" fill="none" stroke="#8a8590" stroke-width="1"/><rect x="0" y="9" width="4" height="4" fill="#3fa43f"/><rect x="1" y="10" width="2" height="2" fill="#a6d6a0"/><rect x="6" y="9" width="4" height="4" fill="#2f9a2f"/><rect x="7" y="10" width="2" height="2" fill="#8cc486"/><rect x="12" y="9" width="4" height="4" fill="#1f7f1f"/><rect x="13" y="10" width="2" height="2" fill="#5fae5a"/></svg>
<div class="abs" style="left:435px;top:129px"><a><i class="k5">D</i>a<i class="k4">t</i>aba<i class="k0">s</i>e<i class="k4"> </i><i class="k0">s</i><i class="k0">c</i>he<i class="k2">m</i>a</a></div>
<div id="h2">Tables and views</div>
<div id="fs"></div>
<div id="legend"><i class="k6">S</i>ea<i class="k3">r</i><i class="k0">c</i>h<i class="k4"> </i>da<i class="k4">t</i>a<i class="k4"> </i><i class="k1">i</i>n<i class="k4"> </i><i class="k4">t</i>ab<i class="k1">l</i>e<i class="k0">s</i><i class="k4"> </i><i class="k3">(</i>1<i class="k3">)</i></div>
<div id="sinp"></div>
<div id="sbtn"><i class="k6">S</i>ea<i class="k3">r</i><i class="k0">c</i>h</div>

<table id="tbl">
<colgroup><col style="width:31px"><col style="width:302px"><col style="width:55px"><col style="width:68px"><col style="width:88px"><col style="width:95px"><col style="width:73px"><col style="width:108px"><col style="width:47px"><col style="width:633px"></colgroup>
<tr><th class="c0"><span class="cb"></span></th><th class="c1h">Table</th><th>Engine</th><th>Collation</th><th>Data Length</th><th>Index Length</th><th>Data Free</th><th>Auto Increment</th><th>Rows</th><th>Comment</th></tr>
<tr class="odd"><td class="c0"><span class="cb"></span></td><td class="c1"><a>ba<i class="k0">s</i>e_<i class="k1">i</i><i class="k2">m</i>po<i class="k3">r</i><i class="k4">t</i>_<i class="k1">i</i><i class="k2">m</i>po<i class="k3">r</i><i class="k4">t</i></a></td><td class="c2"><i class="k4">t</i>ab<i class="k1">l</i>e</td><td class="c3"></td><td class="c4 r"><svg class="ei" width="16" height="16" viewBox="0 0 16 16"><rect x="0.5" y="0.5" width="13" height="13" rx="1" fill="#fff" stroke="#6b9be0"/><rect x="2" y="2" width="10" height="1" fill="#72b863"/><rect x="2" y="4" width="10" height="8" fill="#b4ccf1"/><g fill="#fff"><rect x="3" y="5" width="1" height="1"/><rect x="5" y="5" width="2" height="1"/><rect x="3" y="7" width="1" height="1"/><rect x="5" y="7" width="2" height="1"/><rect x="3" y="9" width="1" height="1"/></g><path d="M3.2 14.6 L4.2 11.4 L11.6 4.0 L14.2 6.6 L6.8 14.0 Z" fill="#f2cf45" stroke="#d07a2c" stroke-width="0.9" stroke-linejoin="round"/><path d="M3.2 14.6 L4.2 11.4 L6.8 14.0 Z" fill="#5c3a12"/><path d="M11.0 4.6 L13.6 7.2" stroke="#f3c9a4" stroke-width="1.4"/></svg><a class="n">0</a></td><td class="c5 r"><a>16<i class="k4">,</i>384</a></td><td class="c6 r"><a>?</a></td><td class="c7 r"><svg class="ei" width="16" height="16" viewBox="0 0 16 16"><rect x="0.5" y="0.5" width="13" height="13" rx="1" fill="#fff" stroke="#6b9be0"/><rect x="2" y="2" width="10" height="1" fill="#72b863"/><rect x="2" y="4" width="10" height="8" fill="#b4ccf1"/><g fill="#fff"><rect x="3" y="5" width="1" height="1"/><rect x="5" y="5" width="2" height="1"/><rect x="3" y="7" width="1" height="1"/><rect x="5" y="7" width="2" height="1"/><rect x="3" y="9" width="1" height="1"/></g><path d="M3.2 14.6 L4.2 11.4 L11.6 4.0 L14.2 6.6 L6.8 14.0 Z" fill="#f2cf45" stroke="#d07a2c" stroke-width="0.9" stroke-linejoin="round"/><path d="M3.2 14.6 L4.2 11.4 L6.8 14.0 Z" fill="#5c3a12"/><path d="M11.0 4.6 L13.6 7.2" stroke="#f3c9a4" stroke-width="1.4"/></svg><a class="n">?</a></td><td class="c8 r"><a>0</a></td><td class="c9">ba<i class="k0">s</i>e_<i class="k1">i</i><i class="k2">m</i>po<i class="k3">r</i><i class="k4">t</i><i class="k4">.</i><i class="k1">i</i><i class="k2">m</i>po<i class="k3">r</i><i class="k4">t</i></td></tr>
<tr class="even"><td class="c0"><span class="cb"></span></td><td class="c1"><a>ba<i class="k0">s</i>e_<i class="k1">i</i><i class="k2">m</i>po<i class="k3">r</i><i class="k4">t</i>_<i class="k4">t</i>e<i class="k0">s</i><i class="k4">t</i><i class="k0">s</i>_<i class="k2">m</i>ode<i class="k1">l</i><i class="k0">s</i>_<i class="k0">c</i>ha<i class="k3">r</i></a></td><td class="c2"><i class="k4">t</i>ab<i class="k1">l</i>e</td><td class="c3"></td><td class="c4 r"><svg class="ei" width="16" height="16" viewBox="0 0 16 16"><rect x="0.5" y="0.5" width="13" height="13" rx="1" fill="#fff" stroke="#6b9be0"/><rect x="2" y="2" width="10" height="1" fill="#72b863"/><rect x="2" y="4" width="10" height="8" fill="#b4ccf1"/><g fill="#fff"><rect x="3" y="5" width="1" height="1"/><rect x="5" y="5" width="2" height="1"/><rect x="3" y="7" width="1" height="1"/><rect x="5" y="7" width="2" height="1"/><rect x="3" y="9" width="1" height="1"/></g><path d="M3.2 14.6 L4.2 11.4 L11.6 4.0 L14.2 6.6 L6.8 14.0 Z" fill="#f2cf45" stroke="#d07a2c" stroke-width="0.9" stroke-linejoin="round"/><path d="M3.2 14.6 L4.2 11.4 L6.8 14.0 Z" fill="#5c3a12"/><path d="M11.0 4.6 L13.6 7.2" stroke="#f3c9a4" stroke-width="1.4"/></svg><a class="n">0</a></td><td class="c5 r"><a>16<i class="k4">,</i>384</a></td><td class="c6 r"><a>?</a></td><td class="c7 r"><svg class="ei" width="16" height="16" viewBox="0 0 16 16"><rect x="0.5" y="0.5" width="13" height="13" rx="1" fill="#fff" stroke="#6b9be0"/><rect x="2" y="2" width="10" height="1" fill="#72b863"/><rect x="2" y="4" width="10" height="8" fill="#b4ccf1"/><g fill="#fff"><rect x="3" y="5" width="1" height="1"/><rect x="5" y="5" width="2" height="1"/><rect x="3" y="7" width="1" height="1"/><rect x="5" y="7" width="2" height="1"/><rect x="3" y="9" width="1" height="1"/></g><path d="M3.2 14.6 L4.2 11.4 L11.6 4.0 L14.2 6.6 L6.8 14.0 Z" fill="#f2cf45" stroke="#d07a2c" stroke-width="0.9" stroke-linejoin="round"/><path d="M3.2 14.6 L4.2 11.4 L6.8 14.0 Z" fill="#5c3a12"/><path d="M11.0 4.6 L13.6 7.2" stroke="#f3c9a4" stroke-width="1.4"/></svg><a class="n">?</a></td><td class="c8 r"><a>0</a></td><td class="c9">ba<i class="k0">s</i>e_<i class="k1">i</i><i class="k2">m</i>po<i class="k3">r</i><i class="k4">t</i><i class="k4">.</i><i class="k4">t</i>e<i class="k0">s</i><i class="k4">t</i><i class="k0">s</i><i class="k4">.</i><i class="k2">m</i>ode<i class="k1">l</i><i class="k0">s</i><i class="k4">.</i><i class="k0">c</i>ha<i class="k3">r</i></td></tr>
<tr class="odd"><td class="c0"><span class="cb"></span></td><td class="c1"><a>ba<i class="k0">s</i>e_<i class="k1">i</i><i class="k2">m</i>po<i class="k3">r</i><i class="k4">t</i>_<i class="k4">t</i>e<i class="k0">s</i><i class="k4">t</i><i class="k0">s</i>_<i class="k2">m</i>ode<i class="k1">l</i><i class="k0">s</i>_<i class="k0">c</i>ha<i class="k3">r</i>_no<i class="k3">r</i>eadon<i class="k1">l</i><i class="k0">y</i></a></td><td class="c2"><i class="k4">t</i>ab<i class="k1">l</i>e</td><td class="c3"></td><td class="c4 r"><svg class="ei" width="16" height="16" viewBox="0 0 16 16"><rect x="0.5" y="0.5" width="13" height="13" rx="1" fill="#fff" stroke="#6b9be0"/><rect x="2" y="2" width="10" height="1" fill="#72b863"/><rect x="2" y="4" width="10" height="8" fill="#b4ccf1"/><g fill="#fff"><rect x="3" y="5" width="1" height="1"/><rect x="5" y="5" width="2" height="1"/><rect x="3" y="7" width="1" height="1"/><rect x="5" y="7" width="2" height="1"/><rect x="3" y="9" width="1" height="1"/></g><path d="M3.2 14.6 L4.2 11.4 L11.6 4.0 L14.2 6.6 L6.8 14.0 Z" fill="#f2cf45" stroke="#d07a2c" stroke-width="0.9" stroke-linejoin="round"/><path d="M3.2 14.6 L4.2 11.4 L6.8 14.0 Z" fill="#5c3a12"/><path d="M11.0 4.6 L13.6 7.2" stroke="#f3c9a4" stroke-width="1.4"/></svg><a class="n">0</a></td><td class="c5 r"><a>16<i class="k4">,</i>384</a></td><td class="c6 r"><a>?</a></td><td class="c7 r"><svg class="ei" width="16" height="16" viewBox="0 0 16 16"><rect x="0.5" y="0.5" width="13" height="13" rx="1" fill="#fff" stroke="#6b9be0"/><rect x="2" y="2" width="10" height="1" fill="#72b863"/><rect x="2" y="4" width="10" height="8" fill="#b4ccf1"/><g fill="#fff"><rect x="3" y="5" width="1" height="1"/><rect x="5" y="5" width="2" height="1"/><rect x="3" y="7" width="1" height="1"/><rect x="5" y="7" width="2" height="1"/><rect x="3" y="9" width="1" height="1"/></g><path d="M3.2 14.6 L4.2 11.4 L11.6 4.0 L14.2 6.6 L6.8 14.0 Z" fill="#f2cf45" stroke="#d07a2c" stroke-width="0.9" stroke-linejoin="round"/><path d="M3.2 14.6 L4.2 11.4 L6.8 14.0 Z" fill="#5c3a12"/><path d="M11.0 4.6 L13.6 7.2" stroke="#f3c9a4" stroke-width="1.4"/></svg><a class="n">?</a></td><td class="c8 r"><a>0</a></td><td class="c9">ba<i class="k0">s</i>e_<i class="k1">i</i><i class="k2">m</i>po<i class="k3">r</i><i class="k4">t</i><i class="k4">.</i><i class="k4">t</i>e<i class="k0">s</i><i class="k4">t</i><i class="k0">s</i><i class="k4">.</i><i class="k2">m</i>ode<i class="k1">l</i><i class="k0">s</i><i class="k4">.</i><i class="k0">c</i>ha<i class="k3">r</i><i class="k4">.</i>no<i class="k3">r</i>eadon<i class="k1">l</i><i class="k0">y</i></td></tr>
<tr class="sel"><td class="c0"><span class="cb checked"><svg width="10" height="10" viewBox="0 0 10 10"><path d="M1.6 5.0 L3.7 7.2 L7.8 2.2" fill="none" stroke="#333" stroke-width="2.4" stroke-linecap="round" stroke-linejoin="round"/></svg></span></td><td class="c1"><a>ba<i class="k0">s</i>e_<i class="k1">i</i><i class="k2">m</i>po<i class="k3">r</i><i class="k4">t</i>_<i class="k4">t</i>e<i class="k0">s</i><i class="k4">t</i><i class="k0">s</i>_<i class="k2">m</i>ode<i class="k1">l</i><i class="k0">s</i>_<i class="k0">c</i>ha<i class="k3">r</i>_<i class="k3">r</i>eadon<i class="k1">l</i><i class="k0">y</i></a></td><td class="c2"><i class="k4">t</i>ab<i class="k1">l</i>e</td><td class="c3"></td><td class="c4 r"><svg class="ei" width="16" height="16" viewBox="0 0 16 16"><rect x="0.5" y="0.5" width="13" height="13" rx="1" fill="#fff" stroke="#6b9be0"/><rect x="2" y="2" width="10" height="1" fill="#72b863"/><rect x="2" y="4" width="10" height="8" fill="#b4ccf1"/><g fill="#fff"><rect x="3" y="5" width="1" height="1"/><rect x="5" y="5" width="2" height="1"/><rect x="3" y="7" width="1" height="1"/><rect x="5" y="7" width="2" height="1"/><rect x="3" y="9" width="1" height="1"/></g><path d="M3.2 14.6 L4.2 11.4 L11.6 4.0 L14.2 6.6 L6.8 14.0 Z" fill="#f2cf45" stroke="#d07a2c" stroke-width="0.9" stroke-linejoin="round"/><path d="M3.2 14.6 L4.2 11.4 L6.8 14.0 Z" fill="#5c3a12"/><path d="M11.0 4.6 L13.6 7.2" stroke="#f3c9a4" stroke-width="1.4"/></svg><a class="n">0</a></td><td class="c5 r"><a>16<i class="k4">,</i>384</a></td><td class="c6 r"><a>?</a></td><td class="c7 r"><svg class="ei" width="16" height="16" viewBox="0 0 16 16"><rect x="0.5" y="0.5" width="13" height="13" rx="1" fill="#fff" stroke="#6b9be0"/><rect x="2" y="2" width="10" height="1" fill="#72b863"/><rect x="2" y="4" width="10" height="8" fill="#b4ccf1"/><g fill="#fff"><rect x="3" y="5" width="1" height="1"/><rect x="5" y="5" width="2" height="1"/><rect x="3" y="7" width="1" height="1"/><rect x="5" y="7" width="2" height="1"/><rect x="3" y="9" width="1" height="1"/></g><path d="M3.2 14.6 L4.2 11.4 L11.6 4.0 L14.2 6.6 L6.8 14.0 Z" fill="#f2cf45" stroke="#d07a2c" stroke-width="0.9" stroke-linejoin="round"/><path d="M3.2 14.6 L4.2 11.4 L6.8 14.0 Z" fill="#5c3a12"/><path d="M11.0 4.6 L13.6 7.2" stroke="#f3c9a4" stroke-width="1.4"/></svg><a class="n">?</a></td><td class="c8 r"><a>0</a></td><td class="c9">ba<i class="k0">s</i>e_<i class="k1">i</i><i class="k2">m</i>po<i class="k3">r</i><i class="k4">t</i><i class="k4">.</i><i class="k4">t</i>e<i class="k0">s</i><i class="k4">t</i><i class="k0">s</i><i class="k4">.</i><i class="k2">m</i>ode<i class="k1">l</i><i class="k0">s</i><i class="k4">.</i><i class="k0">c</i>ha<i class="k3">r</i><i class="k4">.</i><i class="k3">r</i>eadon<i class="k1">l</i><i class="k0">y</i></td></tr>
<tr class="odd"><td class="c0"><span class="cb"></span></td><td class="c1"><a>ba<i class="k0">s</i>e_<i class="k1">i</i><i class="k2">m</i>po<i class="k3">r</i><i class="k4">t</i>_<i class="k4">t</i>e<i class="k0">s</i><i class="k4">t</i><i class="k0">s</i>_<i class="k2">m</i>ode<i class="k1">l</i><i class="k0">s</i>_<i class="k0">c</i>ha<i class="k3">r</i>_<i class="k3">r</i>equ<i class="k1">i</i><i class="k3">r</i>ed</a></td><td class="c2"><i class="k4">t</i>ab<i class="k1">l</i>e</td><td class="c3"></td><td class="c4 r"><svg class="ei" width="16" height="16" viewBox="0 0 16 16"><rect x="0.5" y="0.5" width="13" height="13" rx="1" fill="#fff" stroke="#6b9be0"/><rect x="2" y="2" width="10" height="1" fill="#72b863"/><rect x="2" y="4" width="10" height="8" fill="#b4ccf1"/><g fill="#fff"><rect x="3" y="5" width="1" height="1"/><rect x="5" y="5" width="2" height="1"/><rect x="3" y="7" width="1" height="1"/><rect x="5" y="7" width="2" height="1"/><rect x="3" y="9" width="1" height="1"/></g><path d="M3.2 14.6 L4.2 11.4 L11.6 4.0 L14.2 6.6 L6.8 14.0 Z" fill="#f2cf45" stroke="#d07a2c" stroke-width="0.9" stroke-linejoin="round"/><path d="M3.2 14.6 L4.2 11.4 L6.8 14.0 Z" fill="#5c3a12"/><path d="M11.0 4.6 L13.6 7.2" stroke="#f3c9a4" stroke-width="1.4"/></svg><a class="n">0</a></td><td class="c5 r"><a>16<i class="k4">,</i>384</a></td><td class="c6 r"><a>?</a></td><td class="c7 r"><svg class="ei" width="16" height="16" viewBox="0 0 16 16"><rect x="0.5" y="0.5" width="13" height="13" rx="1" fill="#fff" stroke="#6b9be0"/><rect x="2" y="2" width="10" height="1" fill="#72b863"/><rect x="2" y="4" width="10" height="8" fill="#b4ccf1"/><g fill="#fff"><rect x="3" y="5" width="1" height="1"/><rect x="5" y="5" width="2" height="1"/><rect x="3" y="7" width="1" height="1"/><rect x="5" y="7" width="2" height="1"/><rect x="3" y="9" width="1" height="1"/></g><path d="M3.2 14.6 L4.2 11.4 L11.6 4.0 L14.2 6.6 L6.8 14.0 Z" fill="#f2cf45" stroke="#d07a2c" stroke-width="0.9" stroke-linejoin="round"/><path d="M3.2 14.6 L4.2 11.4 L6.8 14.0 Z" fill="#5c3a12"/><path d="M11.0 4.6 L13.6 7.2" stroke="#f3c9a4" stroke-width="1.4"/></svg><a class="n">?</a></td><td class="c8 r"><a>0</a></td><td class="c9">ba<i class="k0">s</i>e_<i class="k1">i</i><i class="k2">m</i>po<i class="k3">r</i><i class="k4">t</i><i class="k4">.</i><i class="k4">t</i>e<i class="k0">s</i><i class="k4">t</i><i class="k0">s</i><i class="k4">.</i><i class="k2">m</i>ode<i class="k1">l</i><i class="k0">s</i><i class="k4">.</i><i class="k0">c</i>ha<i class="k3">r</i><i class="k4">.</i><i class="k3">r</i>equ<i class="k1">i</i><i class="k3">r</i>ed</td></tr>
<tr class="even"><td class="c0"><span class="cb"></span></td><td class="c1"><a>ba<i class="k0">s</i>e_<i class="k1">i</i><i class="k2">m</i>po<i class="k3">r</i><i class="k4">t</i>_<i class="k4">t</i>e<i class="k0">s</i><i class="k4">t</i><i class="k0">s</i>_<i class="k2">m</i>ode<i class="k1">l</i><i class="k0">s</i>_<i class="k0">c</i>ha<i class="k3">r</i>_<i class="k0">s</i><i class="k4">t</i>a<i class="k4">t</i>e<i class="k0">s</i></a></td><td class="c2"><i class="k4">t</i>ab<i class="k1">l</i>e</td><td class="c3"></td><td class="c4 r"><svg class="ei" width="16" height="16" viewBox="0 0 16 16"><rect x="0.5" y="0.5" width="13" height="13" rx="1" fill="#fff" stroke="#6b9be0"/><rect x="2" y="2" width="10" height="1" fill="#72b863"/><rect x="2" y="4" width="10" height="8" fill="#b4ccf1"/><g fill="#fff"><rect x="3" y="5" width="1" height="1"/><rect x="5" y="5" width="2" height="1"/><rect x="3" y="7" width="1" height="1"/><rect x="5" y="7" width="2" height="1"/><rect x="3" y="9" width="1" height="1"/></g><path d="M3.2 14.6 L4.2 11.4 L11.6 4.0 L14.2 6.6 L6.8 14.0 Z" fill="#f2cf45" stroke="#d07a2c" stroke-width="0.9" stroke-linejoin="round"/><path d="M3.2 14.6 L4.2 11.4 L6.8 14.0 Z" fill="#5c3a12"/><path d="M11.0 4.6 L13.6 7.2" stroke="#f3c9a4" stroke-width="1.4"/></svg><a class="n">0</a></td><td class="c5 r"><a>16<i class="k4">,</i>384</a></td><td class="c6 r"><a>?</a></td><td class="c7 r"><svg class="ei" width="16" height="16" viewBox="0 0 16 16"><rect x="0.5" y="0.5" width="13" height="13" rx="1" fill="#fff" stroke="#6b9be0"/><rect x="2" y="2" width="10" height="1" fill="#72b863"/><rect x="2" y="4" width="10" height="8" fill="#b4ccf1"/><g fill="#fff"><rect x="3" y="5" width="1" height="1"/><rect x="5" y="5" width="2" height="1"/><rect x="3" y="7" width="1" height="1"/><rect x="5" y="7" width="2" height="1"/><rect x="3" y="9" width="1" height="1"/></g><path d="M3.2 14.6 L4.2 11.4 L11.6 4.0 L14.2 6.6 L6.8 14.0 Z" fill="#f2cf45" stroke="#d07a2c" stroke-width="0.9" stroke-linejoin="round"/><path d="M3.2 14.6 L4.2 11.4 L6.8 14.0 Z" fill="#5c3a12"/><path d="M11.0 4.6 L13.6 7.2" stroke="#f3c9a4" stroke-width="1.4"/></svg><a class="n">?</a></td><td class="c8 r"><a>0</a></td><td class="c9">ba<i class="k0">s</i>e_<i class="k1">i</i><i class="k2">m</i>po<i class="k3">r</i><i class="k4">t</i><i class="k4">.</i><i class="k4">t</i>e<i class="k0">s</i><i class="k4">t</i><i class="k0">s</i><i class="k4">.</i><i class="k2">m</i>ode<i class="k1">l</i><i class="k0">s</i><i class="k4">.</i><i class="k0">c</i>ha<i class="k3">r</i><i class="k4">.</i><i class="k0">s</i><i class="k4">t</i>a<i class="k4">t</i>e<i class="k0">s</i></td></tr>
<tr class="odd"><td class="c0"><span class="cb"></span></td><td class="c1"><a>ba<i class="k0">s</i>e_<i class="k1">i</i><i class="k2">m</i>po<i class="k3">r</i><i class="k4">t</i>_<i class="k4">t</i>e<i class="k0">s</i><i class="k4">t</i><i class="k0">s</i>_<i class="k2">m</i>ode<i class="k1">l</i><i class="k0">s</i>_<i class="k0">c</i>ha<i class="k3">r</i>_<i class="k0">s</i><i class="k4">t</i><i class="k1">i</i><i class="k1">l</i><i class="k1">l</i><i class="k3">r</i>eadon<i class="k1">l</i><i class="k0">y</i></a></td><td class="c2"><i class="k4">t</i>ab<i class="k1">l</i>e</td><td class="c3"></td><td class="c4 r"><svg class="ei" width="16" height="16" viewBox="0 0 16 16"><rect x="0.5" y="0.5" width="13" height="13" rx="1" fill="#fff" stroke="#6b9be0"/><rect x="2" y="2" width="10" height="1" fill="#72b863"/><rect x="2" y="4" width="10" height="8" fill="#b4ccf1"/><g fill="#fff"><rect x="3" y="5" width="1" height="1"/><rect x="5" y="5" width="2" height="1"/><rect x="3" y="7" width="1" height="1"/><rect x="5" y="7" width="2" height="1"/><rect x="3" y="9" width="1" height="1"/></g><path d="M3.2 14.6 L4.2 11.4 L11.6 4.0 L14.2 6.6 L6.8 14.0 Z" fill="#f2cf45" stroke="#d07a2c" stroke-width="0.9" stroke-linejoin="round"/><path d="M3.2 14.6 L4.2 11.4 L6.8 14.0 Z" fill="#5c3a12"/><path d="M11.0 4.6 L13.6 7.2" stroke="#f3c9a4" stroke-width="1.4"/></svg><a class="n">0</a></td><td class="c5 r"><a>16<i class="k4">,</i>384</a></td><td class="c6 r"><a>?</a></td><td class="c7 r"><svg class="ei" width="16" height="16" viewBox="0 0 16 16"><rect x="0.5" y="0.5" width="13" height="13" rx="1" fill="#fff" stroke="#6b9be0"/><rect x="2" y="2" width="10" height="1" fill="#72b863"/><rect x="2" y="4" width="10" height="8" fill="#b4ccf1"/><g fill="#fff"><rect x="3" y="5" width="1" height="1"/><rect x="5" y="5" width="2" height="1"/><rect x="3" y="7" width="1" height="1"/><rect x="5" y="7" width="2" height="1"/><rect x="3" y="9" width="1" height="1"/></g><path d="M3.2 14.6 L4.2 11.4 L11.6 4.0 L14.2 6.6 L6.8 14.0 Z" fill="#f2cf45" stroke="#d07a2c" stroke-width="0.9" stroke-linejoin="round"/><path d="M3.2 14.6 L4.2 11.4 L6.8 14.0 Z" fill="#5c3a12"/><path d="M11.0 4.6 L13.6 7.2" stroke="#f3c9a4" stroke-width="1.4"/></svg><a class="n">?</a></td><td class="c8 r"><a>0</a></td><td class="c9">ba<i class="k0">s</i>e_<i class="k1">i</i><i class="k2">m</i>po<i class="k3">r</i><i class="k4">t</i><i class="k4">.</i><i class="k4">t</i>e<i class="k0">s</i><i class="k4">t</i><i class="k0">s</i><i class="k4">.</i><i class="k2">m</i>ode<i class="k1">l</i><i class="k0">s</i><i class="k4">.</i><i class="k0">c</i>ha<i class="k3">r</i><i class="k4">.</i><i class="k0">s</i><i class="k4">t</i><i class="k1">i</i><i class="k1">l</i><i class="k1">l</i><i class="k3">r</i>eadon<i class="k1">l</i><i class="k0">y</i></td></tr>
<tr class="even"><td class="c0"><span class="cb"></span></td><td class="c1"><a>ba<i class="k0">s</i>e_<i class="k1">i</i><i class="k2">m</i>po<i class="k3">r</i><i class="k4">t</i>_<i class="k4">t</i>e<i class="k0">s</i><i class="k4">t</i><i class="k0">s</i>_<i class="k2">m</i>ode<i class="k1">l</i><i class="k0">s</i>_<i class="k2">m</i>2o</a></td><td class="c2"><i class="k4">t</i>ab<i class="k1">l</i>e</td><td class="c3"></td><td class="c4 r"><svg class="ei" width="16" height="16" viewBox="0 0 16 16"><rect x="0.5" y="0.5" width="13" height="13" rx="1" fill="#fff" stroke="#6b9be0"/><rect x="2" y="2" width="10" height="1" fill="#72b863"/><rect x="2" y="4" width="10" height="8" fill="#b4ccf1"/><g fill="#fff"><rect x="3" y="5" width="1" height="1"/><rect x="5" y="5" width="2" height="1"/><rect x="3" y="7" width="1" height="1"/><rect x="5" y="7" width="2" height="1"/><rect x="3" y="9" width="1" height="1"/></g><path d="M3.2 14.6 L4.2 11.4 L11.6 4.0 L14.2 6.6 L6.8 14.0 Z" fill="#f2cf45" stroke="#d07a2c" stroke-width="0.9" stroke-linejoin="round"/><path d="M3.2 14.6 L4.2 11.4 L6.8 14.0 Z" fill="#5c3a12"/><path d="M11.0 4.6 L13.6 7.2" stroke="#f3c9a4" stroke-width="1.4"/></svg><a class="n">0</a></td><td class="c5 r"><a>8<i class="k4">,</i>192</a></td><td class="c6 r"><a>?</a></td><td class="c7 r"><svg class="ei" width="16" height="16" viewBox="0 0 16 16"><rect x="0.5" y="0.5" width="13" height="13" rx="1" fill="#fff" stroke="#6b9be0"/><rect x="2" y="2" width="10" height="1" fill="#72b863"/><rect x="2" y="4" width="10" height="8" fill="#b4ccf1"/><g fill="#fff"><rect x="3" y="5" width="1" height="1"/><rect x="5" y="5" width="2" height="1"/><rect x="3" y="7" width="1" height="1"/><rect x="5" y="7" width="2" height="1"/><rect x="3" y="9" width="1" height="1"/></g><path d="M3.2 14.6 L4.2 11.4 L11.6 4.0 L14.2 6.6 L6.8 14.0 Z" fill="#f2cf45" stroke="#d07a2c" stroke-width="0.9" stroke-linejoin="round"/><path d="M3.2 14.6 L4.2 11.4 L6.8 14.0 Z" fill="#5c3a12"/><path d="M11.0 4.6 L13.6 7.2" stroke="#f3c9a4" stroke-width="1.4"/></svg><a class="n">?</a></td><td class="c8 r"><a>0</a></td><td class="c9">ba<i class="k0">s</i>e_<i class="k1">i</i><i class="k2">m</i>po<i class="k3">r</i><i class="k4">t</i><i class="k4">.</i><i class="k4">t</i>e<i class="k0">s</i><i class="k4">t</i><i class="k0">s</i><i class="k4">.</i><i class="k2">m</i>ode<i class="k1">l</i><i class="k0">s</i><i class="k4">.</i><i class="k2">m</i>2o</td></tr>
<tr class="odd"><td class="c0"><span class="cb"></span></td><td class="c1"><a>ba<i class="k0">s</i>e_<i class="k1">i</i><i class="k2">m</i>po<i class="k3">r</i><i class="k4">t</i>_<i class="k4">t</i>e<i class="k0">s</i><i class="k4">t</i><i class="k0">s</i>_<i class="k2">m</i>ode<i class="k1">l</i><i class="k0">s</i>_<i class="k2">m</i>2o_<i class="k3">r</i>e<i class="k1">l</i>a<i class="k4">t</i>ed</a></td><td class="c2"><i class="k4">t</i>ab<i class="k1">l</i>e</td><td class="c3"></td><td class="c4 r"><svg class="ei" width="16" height="16" viewBox="0 0 16 16"><rect x="0.5" y="0.5" width="13" height="13" rx="1" fill="#fff" stroke="#6b9be0"/><rect x="2" y="2" width="10" height="1" fill="#72b863"/><rect x="2" y="4" width="10" height="8" fill="#b4ccf1"/><g fill="#fff"><rect x="3" y="5" width="1" height="1"/><rect x="5" y="5" width="2" height="1"/><rect x="3" y="7" width="1" height="1"/><rect x="5" y="7" width="2" height="1"/><rect x="3" y="9" width="1" height="1"/></g><path d="M3.2 14.6 L4.2 11.4 L11.6 4.0 L14.2 6.6 L6.8 14.0 Z" fill="#f2cf45" stroke="#d07a2c" stroke-width="0.9" stroke-linejoin="round"/><path d="M3.2 14.6 L4.2 11.4 L6.8 14.0 Z" fill="#5c3a12"/><path d="M11.0 4.6 L13.6 7.2" stroke="#f3c9a4" stroke-width="1.4"/></svg><a class="n">0</a></td><td class="c5 r"><a>8<i class="k4">,</i>192</a></td><td class="c6 r"><a>?</a></td><td class="c7 r"><svg class="ei" width="16" height="16" viewBox="0 0 16 16"><rect x="0.5" y="0.5" width="13" height="13" rx="1" fill="#fff" stroke="#6b9be0"/><rect x="2" y="2" width="10" height="1" fill="#72b863"/><rect x="2" y="4" width="10" height="8" fill="#b4ccf1"/><g fill="#fff"><rect x="3" y="5" width="1" height="1"/><rect x="5" y="5" width="2" height="1"/><rect x="3" y="7" width="1" height="1"/><rect x="5" y="7" width="2" height="1"/><rect x="3" y="9" width="1" height="1"/></g><path d="M3.2 14.6 L4.2 11.4 L11.6 4.0 L14.2 6.6 L6.8 14.0 Z" fill="#f2cf45" stroke="#d07a2c" stroke-width="0.9" stroke-linejoin="round"/><path d="M3.2 14.6 L4.2 11.4 L6.8 14.0 Z" fill="#5c3a12"/><path d="M11.0 4.6 L13.6 7.2" stroke="#f3c9a4" stroke-width="1.4"/></svg><a class="n">?</a></td><td class="c8 r"><a>0</a></td><td class="c9">ba<i class="k0">s</i>e_<i class="k1">i</i><i class="k2">m</i>po<i class="k3">r</i><i class="k4">t</i><i class="k4">.</i><i class="k4">t</i>e<i class="k0">s</i><i class="k4">t</i><i class="k0">s</i><i class="k4">.</i><i class="k2">m</i>ode<i class="k1">l</i><i class="k0">s</i><i class="k4">.</i><i class="k2">m</i>2o<i class="k4">.</i><i class="k3">r</i>e<i class="k1">l</i>a<i class="k4">t</i>ed</td></tr>
<tr class="even"><td class="c0"><span class="cb"></span></td><td class="c1"><a>ba<i class="k0">s</i>e_<i class="k1">i</i><i class="k2">m</i>po<i class="k3">r</i><i class="k4">t</i>_<i class="k4">t</i>e<i class="k0">s</i><i class="k4">t</i><i class="k0">s</i>_<i class="k2">m</i>ode<i class="k1">l</i><i class="k0">s</i>_<i class="k2">m</i>2o_<i class="k3">r</i>equ<i class="k1">i</i><i class="k3">r</i>ed</a></td><td class="c2"><i class="k4">t</i>ab<i class="k1">l</i>e</td><td class="c3"></td><td class="c4 r"><svg class="ei" width="16" height="16" viewBox="0 0 16 16"><rect x="0.5" y="0.5" width="13" height="13" rx="1" fill="#fff" stroke="#6b9be0"/><rect x="2" y="2" width="10" height="1" fill="#72b863"/><rect x="2" y="4" width="10" height="8" fill="#b4ccf1"/><g fill="#fff"><rect x="3" y="5" width="1" height="1"/><rect x="5" y="5" width="2" height="1"/><rect x="3" y="7" width="1" height="1"/><rect x="5" y="7" width="2" height="1"/><rect x="3" y="9" width="1" height="1"/></g><path d="M3.2 14.6 L4.2 11.4 L11.6 4.0 L14.2 6.6 L6.8 14.0 Z" fill="#f2cf45" stroke="#d07a2c" stroke-width="0.9" stroke-linejoin="round"/><path d="M3.2 14.6 L4.2 11.4 L6.8 14.0 Z" fill="#5c3a12"/><path d="M11.0 4.6 L13.6 7.2" stroke="#f3c9a4" stroke-width="1.4"/></svg><a class="n">0</a></td><td class="c5 r"><a>8<i class="k4">,</i>192</a></td><td class="c6 r"><a>?</a></td><td class="c7 r"><svg class="ei" width="16" height="16" viewBox="0 0 16 16"><rect x="0.5" y="0.5" width="13" height="13" rx="1" fill="#fff" stroke="#6b9be0"/><rect x="2" y="2" width="10" height="1" fill="#72b863"/><rect x="2" y="4" width="10" height="8" fill="#b4ccf1"/><g fill="#fff"><rect x="3" y="5" width="1" height="1"/><rect x="5" y="5" width="2" height="1"/><rect x="3" y="7" width="1" height="1"/><rect x="5" y="7" width="2" height="1"/><rect x="3" y="9" width="1" height="1"/></g><path d="M3.2 14.6 L4.2 11.4 L11.6 4.0 L14.2 6.6 L6.8 14.0 Z" fill="#f2cf45" stroke="#d07a2c" stroke-width="0.9" stroke-linejoin="round"/><path d="M3.2 14.6 L4.2 11.4 L6.8 14.0 Z" fill="#5c3a12"/><path d="M11.0 4.6 L13.6 7.2" stroke="#f3c9a4" stroke-width="1.4"/></svg><a class="n">?</a></td><td class="c8 r"><a>0</a></td><td class="c9">ba<i class="k0">s</i>e_<i class="k1">i</i><i class="k2">m</i>po<i class="k3">r</i><i class="k4">t</i><i class="k4">.</i><i class="k4">t</i>e<i class="k0">s</i><i class="k4">t</i><i class="k0">s</i><i class="k4">.</i><i class="k2">m</i>ode<i class="k1">l</i><i class="k0">s</i><i class="k4">.</i><i class="k2">m</i>2o<i class="k4">.</i><i class="k3">r</i>equ<i class="k1">i</i><i class="k3">r</i>ed</td></tr>
<tr class="odd"><td class="c0"><span class="cb"></span></td><td class="c1"><a>ba<i class="k0">s</i>e_<i class="k1">i</i><i class="k2">m</i>po<i class="k3">r</i><i class="k4">t</i>_<i class="k4">t</i>e<i class="k0">s</i><i class="k4">t</i><i class="k0">s</i>_<i class="k2">m</i>ode<i class="k1">l</i><i class="k0">s</i>_<i class="k2">m</i>2o_<i class="k3">r</i>equ<i class="k1">i</i><i class="k3">r</i>ed_<i class="k3">r</i>e<i class="k1">l</i>a<i class="k4">t</i>ed</a></td><td class="c2"><i class="k4">t</i>ab<i class="k1">l</i>e</td><td class="c3"></td><td class="c4 r"><svg class="ei" width="16" height="16" viewBox="0 0 16 16"><rect x="0.5" y="0.5" width="13" height="13" rx="1" fill="#fff" stroke="#6b9be0"/><rect x="2" y="2" width="10" height="1" fill="#72b863"/><rect x="2" y="4" width="10" height="8" fill="#b4ccf1"/><g fill="#fff"><rect x="3" y="5" width="1" height="1"/><rect x="5" y="5" width="2" height="1"/><rect x="3" y="7" width="1" height="1"/><rect x="5" y="7" width="2" height="1"/><rect x="3" y="9" width="1" height="1"/></g><path d="M3.2 14.6 L4.2 11.4 L11.6 4.0 L14.2 6.6 L6.8 14.0 Z" fill="#f2cf45" stroke="#d07a2c" stroke-width="0.9" stroke-linejoin="round"/><path d="M3.2 14.6 L4.2 11.4 L6.8 14.0 Z" fill="#5c3a12"/><path d="M11.0 4.6 L13.6 7.2" stroke="#f3c9a4" stroke-width="1.4"/></svg><a class="n">0</a></td><td class="c5 r"><a>8<i class="k4">,</i>192</a></td><td class="c6 r"><a>?</a></td><td class="c7 r"><svg class="ei" width="16" height="16" viewBox="0 0 16 16"><rect x="0.5" y="0.5" width="13" height="13" rx="1" fill="#fff" stroke="#6b9be0"/><rect x="2" y="2" width="10" height="1" fill="#72b863"/><rect x="2" y="4" width="10" height="8" fill="#b4ccf1"/><g fill="#fff"><rect x="3" y="5" width="1" height="1"/><rect x="5" y="5" width="2" height="1"/><rect x="3" y="7" width="1" height="1"/><rect x="5" y="7" width="2" height="1"/><rect x="3" y="9" width="1" height="1"/></g><path d="M3.2 14.6 L4.2 11.4 L11.6 4.0 L14.2 6.6 L6.8 14.0 Z" fill="#f2cf45" stroke="#d07a2c" stroke-width="0.9" stroke-linejoin="round"/><path d="M3.2 14.6 L4.2 11.4 L6.8 14.0 Z" fill="#5c3a12"/><path d="M11.0 4.6 L13.6 7.2" stroke="#f3c9a4" stroke-width="1.4"/></svg><a class="n">?</a></td><td class="c8 r"><a>0</a></td><td class="c9">ba<i class="k0">s</i>e_<i class="k1">i</i><i class="k2">m</i>po<i class="k3">r</i><i class="k4">t</i><i class="k4">.</i><i class="k4">t</i>e<i class="k0">s</i><i class="k4">t</i><i class="k0">s</i><i class="k4">.</i><i class="k2">m</i>ode<i class="k1">l</i><i class="k0">s</i><i class="k4">.</i><i class="k2">m</i>2o<i class="k4">.</i><i class="k3">r</i>equ<i class="k1">i</i><i class="k3">r</i>ed<i class="k4">.</i><i class="k3">r</i>e<i class="k1">l</i>a<i class="k4">t</i>ed</td></tr>
<tr class="even"><td class="c0"><span class="cb"></span></td><td class="c1"><a>ba<i class="k0">s</i>e_<i class="k1">i</i><i class="k2">m</i>po<i class="k3">r</i><i class="k4">t</i>_<i class="k4">t</i>e<i class="k0">s</i><i class="k4">t</i><i class="k0">s</i>_<i class="k2">m</i>ode<i class="k1">l</i><i class="k0">s</i>_o2<i class="k2">m</i></a></td><td class="c2"><i class="k4">t</i>ab<i class="k1">l</i>e</td><td class="c3"></td><td class="c4 r"><svg class="ei" width="16" height="16" viewBox="0 0 16 16"><rect x="0.5" y="0.5" width="13" height="13" rx="1" fill="#fff" stroke="#6b9be0"/><rect x="2" y="2" width="10" height="1" fill="#72b863"/><rect x="2" y="4" width="10" height="8" fill="#b4ccf1"/><g fill="#fff"><rect x="3" y="5" width="1" height="1"/><rect x="5" y="5" width="2" height="1"/><rect x="3" y="7" width="1" height="1"/><rect x="5" y="7" width="2" height="1"/><rect x="3" y="9" width="1" height="1"/></g><path d="M3.2 14.6 L4.2 11.4 L11.6 4.0 L14.2 6.6 L6.8 14.0 Z" fill="#f2cf45" stroke="#d07a2c" stroke-width="0.9" stroke-linejoin="round"/><path d="M3.2 14.6 L4.2 11.4 L6.8 14.0 Z" fill="#5c3a12"/><path d="M11.0 4.6 L13.6 7.2" stroke="#f3c9a4" stroke-width="1.4"/></svg><a class="n">0</a></td><td class="c5 r"><a>8<i class="k4">,</i>192</a></td><td class="c6 r"><a>?</a></td><td class="c7 r"><svg class="ei" width="16" height="16" viewBox="0 0 16 16"><rect x="0.5" y="0.5" width="13" height="13" rx="1" fill="#fff" stroke="#6b9be0"/><rect x="2" y="2" width="10" height="1" fill="#72b863"/><rect x="2" y="4" width="10" height="8" fill="#b4ccf1"/><g fill="#fff"><rect x="3" y="5" width="1" height="1"/><rect x="5" y="5" width="2" height="1"/><rect x="3" y="7" width="1" height="1"/><rect x="5" y="7" width="2" height="1"/><rect x="3" y="9" width="1" height="1"/></g><path d="M3.2 14.6 L4.2 11.4 L11.6 4.0 L14.2 6.6 L6.8 14.0 Z" fill="#f2cf45" stroke="#d07a2c" stroke-width="0.9" stroke-linejoin="round"/><path d="M3.2 14.6 L4.2 11.4 L6.8 14.0 Z" fill="#5c3a12"/><path d="M11.0 4.6 L13.6 7.2" stroke="#f3c9a4" stroke-width="1.4"/></svg><a class="n">?</a></td><td class="c8 r"><a>0</a></td><td class="c9">ba<i class="k0">s</i>e_<i class="k1">i</i><i class="k2">m</i>po<i class="k3">r</i><i class="k4">t</i><i class="k4">.</i><i class="k4">t</i>e<i class="k0">s</i><i class="k4">t</i><i class="k0">s</i><i class="k4">.</i><i class="k2">m</i>ode<i class="k1">l</i><i class="k0">s</i><i class="k4">.</i>o2<i class="k2">m</i></td></tr>
<tr class="odd"><td class="c0"><span class="cb"></span></td><td class="c1"><a>ba<i class="k0">s</i>e_<i class="k1">i</i><i class="k2">m</i>po<i class="k3">r</i><i class="k4">t</i>_<i class="k4">t</i>e<i class="k0">s</i><i class="k4">t</i><i class="k0">s</i>_<i class="k2">m</i>ode<i class="k1">l</i><i class="k0">s</i>_o2<i class="k2">m</i>_<i class="k0">c</i>h<i class="k1">i</i><i class="k1">l</i>d</a></td><td class="c2"><i class="k4">t</i>ab<i class="k1">l</i>e</td><td class="c3"></td><td class="c4 r"><svg class="ei" width="16" height="16" viewBox="0 0 16 16"><rect x="0.5" y="0.5" width="13" height="13" rx="1" fill="#fff" stroke="#6b9be0"/><rect x="2" y="2" width="10" height="1" fill="#72b863"/><rect x="2" y="4" width="10" height="8" fill="#b4ccf1"/><g fill="#fff"><rect x="3" y="5" width="1" height="1"/><rect x="5" y="5" width="2" height="1"/><rect x="3" y="7" width="1" height="1"/><rect x="5" y="7" width="2" height="1"/><rect x="3" y="9" width="1" height="1"/></g><path d="M3.2 14.6 L4.2 11.4 L11.6 4.0 L14.2 6.6 L6.8 14.0 Z" fill="#f2cf45" stroke="#d07a2c" stroke-width="0.9" stroke-linejoin="round"/><path d="M3.2 14.6 L4.2 11.4 L6.8 14.0 Z" fill="#5c3a12"/><path d="M11.0 4.6 L13.6 7.2" stroke="#f3c9a4" stroke-width="1.4"/></svg><a class="n">0</a></td><td class="c5 r"><a>8<i class="k4">,</i>192</a></td><td class="c6 r"><a>?</a></td><td class="c7 r"><svg class="ei" width="16" height="16" viewBox="0 0 16 16"><rect x="0.5" y="0.5" width="13" height="13" rx="1" fill="#fff" stroke="#6b9be0"/><rect x="2" y="2" width="10" height="1" fill="#72b863"/><rect x="2" y="4" width="10" height="8" fill="#b4ccf1"/><g fill="#fff"><rect x="3" y="5" width="1" height="1"/><rect x="5" y="5" width="2" height="1"/><rect x="3" y="7" width="1" height="1"/><rect x="5" y="7" width="2" height="1"/><rect x="3" y="9" width="1" height="1"/></g><path d="M3.2 14.6 L4.2 11.4 L11.6 4.0 L14.2 6.6 L6.8 14.0 Z" fill="#f2cf45" stroke="#d07a2c" stroke-width="0.9" stroke-linejoin="round"/><path d="M3.2 14.6 L4.2 11.4 L6.8 14.0 Z" fill="#5c3a12"/><path d="M11.0 4.6 L13.6 7.2" stroke="#f3c9a4" stroke-width="1.4"/></svg><a class="n">?</a></td><td class="c8 r"><a>0</a></td><td class="c9">ba<i class="k0">s</i>e_<i class="k1">i</i><i class="k2">m</i>po<i class="k3">r</i><i class="k4">t</i><i class="k4">.</i><i class="k4">t</i>e<i class="k0">s</i><i class="k4">t</i><i class="k0">s</i><i class="k4">.</i><i class="k2">m</i>ode<i class="k1">l</i><i class="k0">s</i><i class="k4">.</i>o2<i class="k2">m</i><i class="k4">.</i><i class="k0">c</i>h<i class="k1">i</i><i class="k1">l</i>d</td></tr>
<tr class="even"><td class="c0"><span class="cb"></span></td><td class="c1"><a>ba<i class="k0">s</i>e_<i class="k1">i</i><i class="k2">m</i>po<i class="k3">r</i><i class="k4">t</i>_<i class="k4">t</i>e<i class="k0">s</i><i class="k4">t</i><i class="k0">s</i>_<i class="k2">m</i>ode<i class="k1">l</i><i class="k0">s</i>_p<i class="k3">r</i>e<i class="k0">v</i><i class="k1">i</i>e<i class="k5">w</i></a></td><td class="c2"><i class="k4">t</i>ab<i class="k1">l</i>e</td><td class="c3"></td><td class="c4 r"><svg class="ei" width="16" height="16" viewBox="0 0 16 16"><rect x="0.5" y="0.5" width="13" height="13" rx="1" fill="#fff" stroke="#6b9be0"/><rect x="2" y="2" width="10" height="1" fill="#72b863"/><rect x="2" y="4" width="10" height="8" fill="#b4ccf1"/><g fill="#fff"><rect x="3" y="5" width="1" height="1"/><rect x="5" y="5" width="2" height="1"/><rect x="3" y="7" width="1" height="1"/><rect x="5" y="7" width="2" height="1"/><rect x="3" y="9" width="1" height="1"/></g><path d="M3.2 14.6 L4.2 11.4 L11.6 4.0 L14.2 6.6 L6.8 14.0 Z" fill="#f2cf45" stroke="#d07a2c" stroke-width="0.9" stroke-linejoin="round"/><path d="M3.2 14.6 L4.2 11.4 L6.8 14.0 Z" fill="#5c3a12"/><path d="M11.0 4.6 L13.6 7.2" stroke="#f3c9a4" stroke-width="1.4"/></svg><a class="n">0</a></td><td class="c5 r"><a>16<i class="k4">,</i>384</a></td><td class="c6 r"><a>?</a></td><td class="c7 r"><svg class="ei" width="16" height="16" viewBox="0 0 16 16"><rect x="0.5" y="0.5" width="13" height="13" rx="1" fill="#fff" stroke="#6b9be0"/><rect x="2" y="2" width="10" height="1" fill="#72b863"/><rect x="2" y="4" width="10" height="8" fill="#b4ccf1"/><g fill="#fff"><rect x="3" y="5" width="1" height="1"/><rect x="5" y="5" width="2" height="1"/><rect x="3" y="7" width="1" height="1"/><rect x="5" y="7" width="2" height="1"/><rect x="3" y="9" width="1" height="1"/></g><path d="M3.2 14.6 L4.2 11.4 L11.6 4.0 L14.2 6.6 L6.8 14.0 Z" fill="#f2cf45" stroke="#d07a2c" stroke-width="0.9" stroke-linejoin="round"/><path d="M3.2 14.6 L4.2 11.4 L6.8 14.0 Z" fill="#5c3a12"/><path d="M11.0 4.6 L13.6 7.2" stroke="#f3c9a4" stroke-width="1.4"/></svg><a class="n">?</a></td><td class="c8 r"><a>0</a></td><td class="c9">ba<i class="k0">s</i>e_<i class="k1">i</i><i class="k2">m</i>po<i class="k3">r</i><i class="k4">t</i><i class="k4">.</i><i class="k4">t</i>e<i class="k0">s</i><i class="k4">t</i><i class="k0">s</i><i class="k4">.</i><i class="k2">m</i>ode<i class="k1">l</i><i class="k0">s</i><i class="k4">.</i>p<i class="k3">r</i>e<i class="k0">v</i><i class="k1">i</i>e<i class="k5">w</i></td></tr>
<tr class="odd"><td class="c0"><span class="cb"></span></td><td class="c1"><a>ba<i class="k0">s</i>e_<i class="k1">l</i>anguage_e<i class="k0">x</i>po<i class="k3">r</i><i class="k4">t</i></a></td><td class="c2"><i class="k4">t</i>ab<i class="k1">l</i>e</td><td class="c3"></td><td class="c4 r"><svg class="ei" width="16" height="16" viewBox="0 0 16 16"><rect x="0.5" y="0.5" width="13" height="13" rx="1" fill="#fff" stroke="#6b9be0"/><rect x="2" y="2" width="10" height="1" fill="#72b863"/><rect x="2" y="4" width="10" height="8" fill="#b4ccf1"/><g fill="#fff"><rect x="3" y="5" width="1" height="1"/><rect x="5" y="5" width="2" height="1"/><rect x="3" y="7" width="1" height="1"/><rect x="5" y="7" width="2" height="1"/><rect x="3" y="9" width="1" height="1"/></g><path d="M3.2 14.6 L4.2 11.4 L11.6 4.0 L14.2 6.6 L6.8 14.0 Z" fill="#f2cf45" stroke="#d07a2c" stroke-width="0.9" stroke-linejoin="round"/><path d="M3.2 14.6 L4.2 11.4 L6.8 14.0 Z" fill="#5c3a12"/><path d="M11.0 4.6 L13.6 7.2" stroke="#f3c9a4" stroke-width="1.4"/></svg><a class="n">0</a></td><td class="c5 r"><a>16<i class="k4">,</i>384</a></td><td class="c6 r"><a>?</a></td><td class="c7 r"><svg class="ei" width="16" height="16" viewBox="0 0 16 16"><rect x="0.5" y="0.5" width="13" height="13" rx="1" fill="#fff" stroke="#6b9be0"/><rect x="2" y="2" width="10" height="1" fill="#72b863"/><rect x="2" y="4" width="10" height="8" fill="#b4ccf1"/><g fill="#fff"><rect x="3" y="5" width="1" height="1"/><rect x="5" y="5" width="2" height="1"/><rect x="3" y="7" width="1" height="1"/><rect x="5" y="7" width="2" height="1"/><rect x="3" y="9" width="1" height="1"/></g><path d="M3.2 14.6 L4.2 11.4 L11.6 4.0 L14.2 6.6 L6.8 14.0 Z" fill="#f2cf45" stroke="#d07a2c" stroke-width="0.9" stroke-linejoin="round"/><path d="M3.2 14.6 L4.2 11.4 L6.8 14.0 Z" fill="#5c3a12"/><path d="M11.0 4.6 L13.6 7.2" stroke="#f3c9a4" stroke-width="1.4"/></svg><a class="n">?</a></td><td class="c8 r"><a>0</a></td><td class="c9">ba<i class="k0">s</i>e<i class="k4">.</i><i class="k1">l</i>anguage<i class="k4">.</i>e<i class="k0">x</i>po<i class="k3">r</i><i class="k4">t</i></td></tr>
<tr class="even"><td class="c0"><span class="cb"></span></td><td class="c1"><a>ba<i class="k0">s</i>e_<i class="k1">l</i>anguage_<i class="k1">i</i><i class="k2">m</i>po<i class="k3">r</i><i class="k4">t</i></a></td><td class="c2"><i class="k4">t</i>ab<i class="k1">l</i>e</td><td class="c3"></td><td class="c4 r"><svg class="ei" width="16" height="16" viewBox="0 0 16 16"><rect x="0.5" y="0.5" width="13" height="13" rx="1" fill="#fff" stroke="#6b9be0"/><rect x="2" y="2" width="10" height="1" fill="#72b863"/><rect x="2" y="4" width="10" height="8" fill="#b4ccf1"/><g fill="#fff"><rect x="3" y="5" width="1" height="1"/><rect x="5" y="5" width="2" height="1"/><rect x="3" y="7" width="1" height="1"/><rect x="5" y="7" width="2" height="1"/><rect x="3" y="9" width="1" height="1"/></g><path d="M3.2 14.6 L4.2 11.4 L11.6 4.0 L14.2 6.6 L6.8 14.0 Z" fill="#f2cf45" stroke="#d07a2c" stroke-width="0.9" stroke-linejoin="round"/><path d="M3.2 14.6 L4.2 11.4 L6.8 14.0 Z" fill="#5c3a12"/><path d="M11.0 4.6 L13.6 7.2" stroke="#f3c9a4" stroke-width="1.4"/></svg><a class="n">0</a></td><td class="c5 r"><a>16<i class="k4">,</i>384</a></td><td class="c6 r"><a>?</a></td><td class="c7 r"><svg class="ei" width="16" height="16" viewBox="0 0 16 16"><rect x="0.5" y="0.5" width="13" height="13" rx="1" fill="#fff" stroke="#6b9be0"/><rect x="2" y="2" width="10" height="1" fill="#72b863"/><rect x="2" y="4" width="10" height="8" fill="#b4ccf1"/><g fill="#fff"><rect x="3" y="5" width="1" height="1"/><rect x="5" y="5" width="2" height="1"/><rect x="3" y="7" width="1" height="1"/><rect x="5" y="7" width="2" height="1"/><rect x="3" y="9" width="1" height="1"/></g><path d="M3.2 14.6 L4.2 11.4 L11.6 4.0 L14.2 6.6 L6.8 14.0 Z" fill="#f2cf45" stroke="#d07a2c" stroke-width="0.9" stroke-linejoin="round"/><path d="M3.2 14.6 L4.2 11.4 L6.8 14.0 Z" fill="#5c3a12"/><path d="M11.0 4.6 L13.6 7.2" stroke="#f3c9a4" stroke-width="1.4"/></svg><a class="n">?</a></td><td class="c8 r"><a>0</a></td><td class="c9">Language<i class="k4"> </i><i class="k4">I</i><i class="k2">m</i>po<i class="k3">r</i><i class="k4">t</i></td></tr>
<tr class="odd"><td class="c0"><span class="cb"></span></td><td class="c1"><a>ba<i class="k0">s</i>e_<i class="k1">l</i>anguage_<i class="k1">i</i>n<i class="k0">s</i><i class="k4">t</i>a<i class="k1">l</i><i class="k1">l</i></a></td><td class="c2"><i class="k4">t</i>ab<i class="k1">l</i>e</td><td class="c3"></td><td class="c4 r"><svg class="ei" width="16" height="16" viewBox="0 0 16 16"><rect x="0.5" y="0.5" width="13" height="13" rx="1" fill="#fff" stroke="#6b9be0"/><rect x="2" y="2" width="10" height="1" fill="#72b863"/><rect x="2" y="4" width="10" height="8" fill="#b4ccf1"/><g fill="#fff"><rect x="3" y="5" width="1" height="1"/><rect x="5" y="5" width="2" height="1"/><rect x="3" y="7" width="1" height="1"/><rect x="5" y="7" width="2" height="1"/><rect x="3" y="9" width="1" height="1"/></g><path d="M3.2 14.6 L4.2 11.4 L11.6 4.0 L14.2 6.6 L6.8 14.0 Z" fill="#f2cf45" stroke="#d07a2c" stroke-width="0.9" stroke-linejoin="round"/><path d="M3.2 14.6 L4.2 11.4 L6.8 14.0 Z" fill="#5c3a12"/><path d="M11.0 4.6 L13.6 7.2" stroke="#f3c9a4" stroke-width="1.4"/></svg><a class="n">0</a></td><td class="c5 r"><a>16<i class="k4">,</i>384</a></td><td class="c6 r"><a>?</a></td><td class="c7 r"><svg class="ei" width="16" height="16" viewBox="0 0 16 16"><rect x="0.5" y="0.5" width="13" height="13" rx="1" fill="#fff" stroke="#6b9be0"/><rect x="2" y="2" width="10" height="1" fill="#72b863"/><rect x="2" y="4" width="10" height="8" fill="#b4ccf1"/><g fill="#fff"><rect x="3" y="5" width="1" height="1"/><rect x="5" y="5" width="2" height="1"/><rect x="3" y="7" width="1" height="1"/><rect x="5" y="7" width="2" height="1"/><rect x="3" y="9" width="1" height="1"/></g><path d="M3.2 14.6 L4.2 11.4 L11.6 4.0 L14.2 6.6 L6.8 14.0 Z" fill="#f2cf45" stroke="#d07a2c" stroke-width="0.9" stroke-linejoin="round"/><path d="M3.2 14.6 L4.2 11.4 L6.8 14.0 Z" fill="#5c3a12"/><path d="M11.0 4.6 L13.6 7.2" stroke="#f3c9a4" stroke-width="1.4"/></svg><a class="n">?</a></td><td class="c8 r"><a>0</a></td><td class="c9"><i class="k4">I</i>n<i class="k0">s</i><i class="k4">t</i>a<i class="k1">l</i><i class="k1">l</i><i class="k4"> </i>Language</td></tr>
<tr class="even"><td class="c0"><span class="cb"></span></td><td class="c1"><a>ba<i class="k0">s</i>e_<i class="k2">m</i>odu<i class="k1">l</i>e_un<i class="k1">i</i>n<i class="k0">s</i><i class="k4">t</i>a<i class="k1">l</i><i class="k1">l</i></a></td><td class="c2"><i class="k4">t</i>ab<i class="k1">l</i>e</td><td class="c3"></td><td class="c4 r"><svg class="ei" width="16" height="16" viewBox="0 0 16 16"><rect x="0.5" y="0.5" width="13" height="13" rx="1" fill="#fff" stroke="#6b9be0"/><rect x="2" y="2" width="10" height="1" fill="#72b863"/><rect x="2" y="4" width="10" height="8" fill="#b4ccf1"/><g fill="#fff"><rect x="3" y="5" width="1" height="1"/><rect x="5" y="5" width="2" height="1"/><rect x="3" y="7" width="1" height="1"/><rect x="5" y="7" width="2" height="1"/><rect x="3" y="9" width="1" height="1"/></g><path d="M3.2 14.6 L4.2 11.4 L11.6 4.0 L14.2 6.6 L6.8 14.0 Z" fill="#f2cf45" stroke="#d07a2c" stroke-width="0.9" stroke-linejoin="round"/><path d="M3.2 14.6 L4.2 11.4 L6.8 14.0 Z" fill="#5c3a12"/><path d="M11.0 4.6 L13.6 7.2" stroke="#f3c9a4" stroke-width="1.4"/></svg><a class="n">0</a></td><td class="c5 r"><a>8<i class="k4">,</i>192</a></td><td class="c6 r"><a>?</a></td><td class="c7 r"><svg class="ei" width="16" height="16" viewBox="0 0 16 16"><rect x="0.5" y="0.5" width="13" height="13" rx="1" fill="#fff" stroke="#6b9be0"/><rect x="2" y="2" width="10" height="1" fill="#72b863"/><rect x="2" y="4" width="10" height="8" fill="#b4ccf1"/><g fill="#fff"><rect x="3" y="5" width="1" height="1"/><rect x="5" y="5" width="2" height="1"/><rect x="3" y="7" width="1" height="1"/><rect x="5" y="7" width="2" height="1"/><rect x="3" y="9" width="1" height="1"/></g><path d="M3.2 14.6 L4.2 11.4 L11.6 4.0 L14.2 6.6 L6.8 14.0 Z" fill="#f2cf45" stroke="#d07a2c" stroke-width="0.9" stroke-linejoin="round"/><path d="M3.2 14.6 L4.2 11.4 L6.8 14.0 Z" fill="#5c3a12"/><path d="M11.0 4.6 L13.6 7.2" stroke="#f3c9a4" stroke-width="1.4"/></svg><a class="n">?</a></td><td class="c8 r"><a>0</a></td><td class="c9"><i class="k2">M</i>odu<i class="k1">l</i>e<i class="k4"> </i><i class="k5">U</i>n<i class="k1">i</i>n<i class="k0">s</i><i class="k4">t</i>a<i class="k1">l</i><i class="k1">l</i>a<i class="k4">t</i><i class="k1">i</i>on</td></tr>
<tr class="odd"><td class="c0"><span class="cb"></span></td><td class="c1"><a>ba<i class="k0">s</i>e_<i class="k2">m</i>odu<i class="k1">l</i>e_upda<i class="k4">t</i>e</a></td><td class="c2"><i class="k4">t</i>ab<i class="k1">l</i>e</td><td class="c3"></td><td class="c4 r"><svg class="ei" width="16" height="16" viewBox="0 0 16 16"><rect x="0.5" y="0.5" width="13" height="13" rx="1" fill="#fff" stroke="#6b9be0"/><rect x="2" y="2" width="10" height="1" fill="#72b863"/><rect x="2" y="4" width="10" height="8" fill="#b4ccf1"/><g fill="#fff"><rect x="3" y="5" width="1" height="1"/><rect x="5" y="5" width="2" height="1"/><rect x="3" y="7" width="1" height="1"/><rect x="5" y="7" width="2" height="1"/><rect x="3" y="9" width="1" height="1"/></g><path d="M3.2 14.6 L4.2 11.4 L11.6 4.0 L14.2 6.6 L6.8 14.0 Z" fill="#f2cf45" stroke="#d07a2c" stroke-width="0.9" stroke-linejoin="round"/><path d="M3.2 14.6 L4.2 11.4 L6.8 14.0 Z" fill="#5c3a12"/><path d="M11.0 4.6 L13.6 7.2" stroke="#f3c9a4" stroke-width="1.4"/></svg><a class="n">0</a></td><td class="c5 r"><a>16<i class="k4">,</i>384</a></td><td class="c6 r"><a>?</a></td><td class="c7 r"><svg class="ei" width="16" height="16" viewBox="0 0 16 16"><rect x="0.5" y="0.5" width="13" height="13" rx="1" fill="#fff" stroke="#6b9be0"/><rect x="2" y="2" width="10" height="1" fill="#72b863"/><rect x="2" y="4" width="10" height="8" fill="#b4ccf1"/><g fill="#fff"><rect x="3" y="5" width="1" height="1"/><rect x="5" y="5" width="2" height="1"/><rect x="3" y="7" width="1" height="1"/><rect x="5" y="7" width="2" height="1"/><rect x="3" y="9" width="1" height="1"/></g><path d="M3.2 14.6 L4.2 11.4 L11.6 4.0 L14.2 6.6 L6.8 14.0 Z" fill="#f2cf45" stroke="#d07a2c" stroke-width="0.9" stroke-linejoin="round"/><path d="M3.2 14.6 L4.2 11.4 L6.8 14.0 Z" fill="#5c3a12"/><path d="M11.0 4.6 L13.6 7.2" stroke="#f3c9a4" stroke-width="1.4"/></svg><a class="n">?</a></td><td class="c8 r"><a>0</a></td><td class="c9"><i class="k5">U</i>pda<i class="k4">t</i>e<i class="k4"> </i><i class="k2">M</i>odu<i class="k1">l</i>e</td></tr>
<tr class="even"><td class="c0"><span class="cb"></span></td><td class="c1"><a>ba<i class="k0">s</i>e_<i class="k2">m</i>odu<i class="k1">l</i>e_upg<i class="k3">r</i>ade</a></td><td class="c2"><i class="k4">t</i>ab<i class="k1">l</i>e</td><td class="c3"></td><td class="c4 r"><svg class="ei" width="16" height="16" viewBox="0 0 16 16"><rect x="0.5" y="0.5" width="13" height="13" rx="1" fill="#fff" stroke="#6b9be0"/><rect x="2" y="2" width="10" height="1" fill="#72b863"/><rect x="2" y="4" width="10" height="8" fill="#b4ccf1"/><g fill="#fff"><rect x="3" y="5" width="1" height="1"/><rect x="5" y="5" width="2" height="1"/><rect x="3" y="7" width="1" height="1"/><rect x="5" y="7" width="2" height="1"/><rect x="3" y="9" width="1" height="1"/></g><path d="M3.2 14.6 L4.2 11.4 L11.6 4.0 L14.2 6.6 L6.8 14.0 Z" fill="#f2cf45" stroke="#d07a2c" stroke-width="0.9" stroke-linejoin="round"/><path d="M3.2 14.6 L4.2 11.4 L6.8 14.0 Z" fill="#5c3a12"/><path d="M11.0 4.6 L13.6 7.2" stroke="#f3c9a4" stroke-width="1.4"/></svg><a class="n">0</a></td><td class="c5 r"><a>16<i class="k4">,</i>384</a></td><td class="c6 r"><a>?</a></td><td class="c7 r"><svg class="ei" width="16" height="16" viewBox="0 0 16 16"><rect x="0.5" y="0.5" width="13" height="13" rx="1" fill="#fff" stroke="#6b9be0"/><rect x="2" y="2" width="10" height="1" fill="#72b863"/><rect x="2" y="4" width="10" height="8" fill="#b4ccf1"/><g fill="#fff"><rect x="3" y="5" width="1" height="1"/><rect x="5" y="5" width="2" height="1"/><rect x="3" y="7" width="1" height="1"/><rect x="5" y="7" width="2" height="1"/><rect x="3" y="9" width="1" height="1"/></g><path d="M3.2 14.6 L4.2 11.4 L11.6 4.0 L14.2 6.6 L6.8 14.0 Z" fill="#f2cf45" stroke="#d07a2c" stroke-width="0.9" stroke-linejoin="round"/><path d="M3.2 14.6 L4.2 11.4 L6.8 14.0 Z" fill="#5c3a12"/><path d="M11.0 4.6 L13.6 7.2" stroke="#f3c9a4" stroke-width="1.4"/></svg><a class="n">?</a></td><td class="c8 r"><a>0</a></td><td class="c9"><i class="k2">M</i>odu<i class="k1">l</i>e<i class="k4"> </i><i class="k5">U</i>pg<i class="k3">r</i>ade</td></tr>
</table>
</div></body></html>
